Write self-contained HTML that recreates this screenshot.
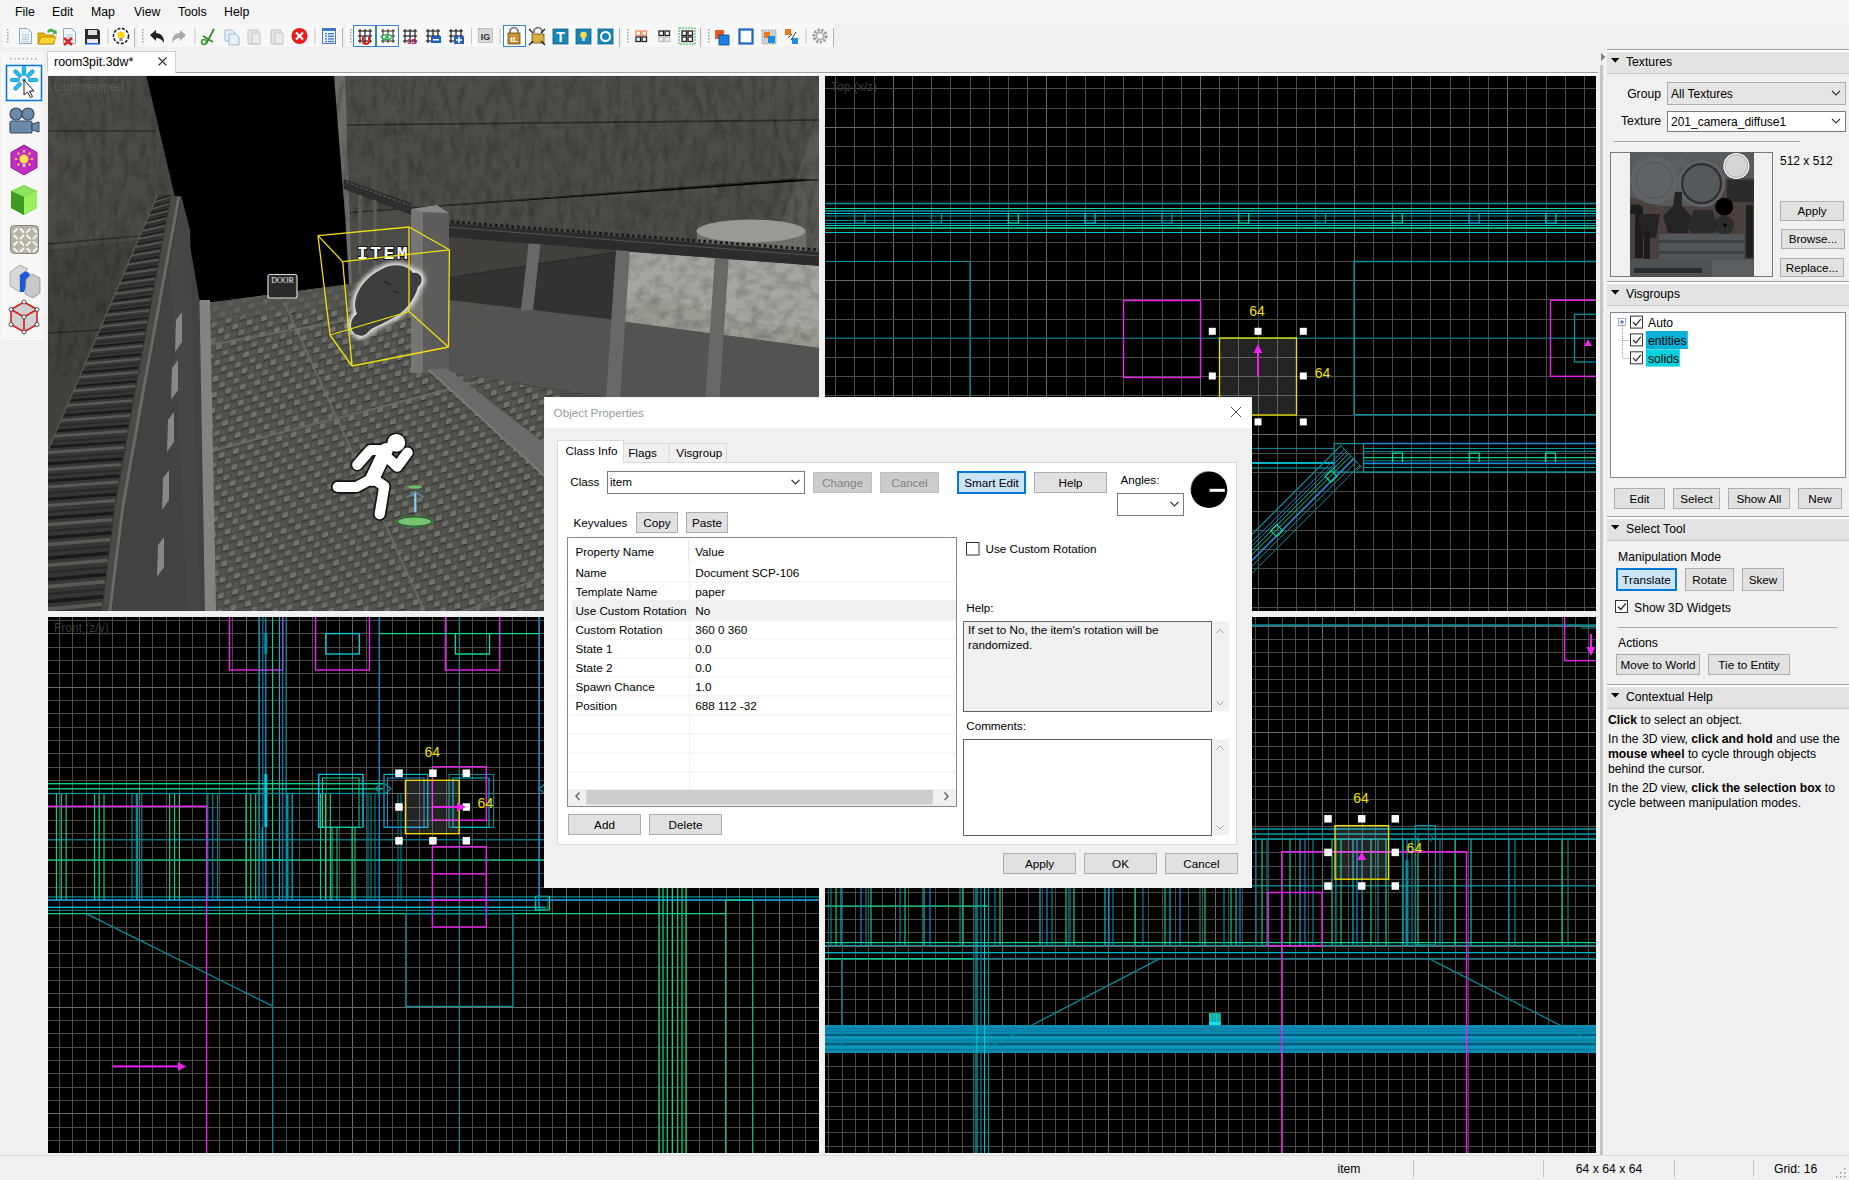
<!DOCTYPE html>
<html><head><meta charset="utf-8"><title>editor</title>
<style>
html,body{margin:0;padding:0;width:1849px;height:1180px;overflow:hidden;background:#f0f0f0}
body{position:relative;font-family:"Liberation Sans", sans-serif}
svg text{font-family:"Liberation Sans", sans-serif}
</style></head><body>
<svg width="1849" height="1180" viewBox="0 0 1849 1180" style="position:absolute;left:0;top:0">
<rect width="1849" height="1180" fill="#f0f0f0"/>
<rect x="0" y="0" width="1849" height="24" fill="#f4f4f4" stroke="none" stroke-width="1" />
<text x="15" y="16" font-size="12.3" fill="#000" text-anchor="start" font-weight="normal" >File</text>
<text x="52" y="16" font-size="12.3" fill="#000" text-anchor="start" font-weight="normal" >Edit</text>
<text x="91" y="16" font-size="12.3" fill="#000" text-anchor="start" font-weight="normal" >Map</text>
<text x="134" y="16" font-size="12.3" fill="#000" text-anchor="start" font-weight="normal" >View</text>
<text x="178" y="16" font-size="12.3" fill="#000" text-anchor="start" font-weight="normal" >Tools</text>
<text x="224" y="16" font-size="12.3" fill="#000" text-anchor="start" font-weight="normal" >Help</text>
<rect x="2" y="24" width="133" height="23" fill="#f7f7f7" stroke="none" stroke-width="1" rx="2"/>
<rect x="7" y="29" width="1.5" height="1.5" fill="#a0a0a0" stroke="none" stroke-width="1" />
<rect x="7" y="32" width="1.5" height="1.5" fill="#a0a0a0" stroke="none" stroke-width="1" />
<rect x="7" y="35" width="1.5" height="1.5" fill="#a0a0a0" stroke="none" stroke-width="1" />
<rect x="7" y="38" width="1.5" height="1.5" fill="#a0a0a0" stroke="none" stroke-width="1" />
<rect x="7" y="41" width="1.5" height="1.5" fill="#a0a0a0" stroke="none" stroke-width="1" />
<rect x="134" y="28" width="1" height="19" fill="#b4b4b4" stroke="none" stroke-width="1" />
<rect x="137" y="24" width="206" height="23" fill="#f7f7f7" stroke="none" stroke-width="1" rx="2"/>
<rect x="142" y="29" width="1.5" height="1.5" fill="#a0a0a0" stroke="none" stroke-width="1" />
<rect x="142" y="32" width="1.5" height="1.5" fill="#a0a0a0" stroke="none" stroke-width="1" />
<rect x="142" y="35" width="1.5" height="1.5" fill="#a0a0a0" stroke="none" stroke-width="1" />
<rect x="142" y="38" width="1.5" height="1.5" fill="#a0a0a0" stroke="none" stroke-width="1" />
<rect x="142" y="41" width="1.5" height="1.5" fill="#a0a0a0" stroke="none" stroke-width="1" />
<rect x="342" y="28" width="1" height="19" fill="#b4b4b4" stroke="none" stroke-width="1" />
<rect x="345" y="24" width="275" height="23" fill="#f7f7f7" stroke="none" stroke-width="1" rx="2"/>
<rect x="350" y="29" width="1.5" height="1.5" fill="#a0a0a0" stroke="none" stroke-width="1" />
<rect x="350" y="32" width="1.5" height="1.5" fill="#a0a0a0" stroke="none" stroke-width="1" />
<rect x="350" y="35" width="1.5" height="1.5" fill="#a0a0a0" stroke="none" stroke-width="1" />
<rect x="350" y="38" width="1.5" height="1.5" fill="#a0a0a0" stroke="none" stroke-width="1" />
<rect x="350" y="41" width="1.5" height="1.5" fill="#a0a0a0" stroke="none" stroke-width="1" />
<rect x="619" y="28" width="1" height="19" fill="#b4b4b4" stroke="none" stroke-width="1" />
<rect x="622" y="24" width="79" height="23" fill="#f7f7f7" stroke="none" stroke-width="1" rx="2"/>
<rect x="627" y="29" width="1.5" height="1.5" fill="#a0a0a0" stroke="none" stroke-width="1" />
<rect x="627" y="32" width="1.5" height="1.5" fill="#a0a0a0" stroke="none" stroke-width="1" />
<rect x="627" y="35" width="1.5" height="1.5" fill="#a0a0a0" stroke="none" stroke-width="1" />
<rect x="627" y="38" width="1.5" height="1.5" fill="#a0a0a0" stroke="none" stroke-width="1" />
<rect x="627" y="41" width="1.5" height="1.5" fill="#a0a0a0" stroke="none" stroke-width="1" />
<rect x="700" y="28" width="1" height="19" fill="#b4b4b4" stroke="none" stroke-width="1" />
<rect x="703" y="24" width="131" height="23" fill="#f7f7f7" stroke="none" stroke-width="1" rx="2"/>
<rect x="708" y="29" width="1.5" height="1.5" fill="#a0a0a0" stroke="none" stroke-width="1" />
<rect x="708" y="32" width="1.5" height="1.5" fill="#a0a0a0" stroke="none" stroke-width="1" />
<rect x="708" y="35" width="1.5" height="1.5" fill="#a0a0a0" stroke="none" stroke-width="1" />
<rect x="708" y="38" width="1.5" height="1.5" fill="#a0a0a0" stroke="none" stroke-width="1" />
<rect x="708" y="41" width="1.5" height="1.5" fill="#a0a0a0" stroke="none" stroke-width="1" />
<rect x="833" y="28" width="1" height="19" fill="#b4b4b4" stroke="none" stroke-width="1" />
<line x1="108" y1="28" x2="108" y2="44" stroke="#c8c8c8" stroke-width="1" />
<line x1="195" y1="28" x2="195" y2="44" stroke="#c8c8c8" stroke-width="1" />
<line x1="315" y1="28" x2="315" y2="44" stroke="#c8c8c8" stroke-width="1" />
<line x1="471.5" y1="28" x2="471.5" y2="44" stroke="#c8c8c8" stroke-width="1" />
<line x1="500" y1="28" x2="500" y2="44" stroke="#c8c8c8" stroke-width="1" />
<line x1="806" y1="28" x2="806" y2="44" stroke="#c8c8c8" stroke-width="1" />
<path d="M19.5,28.5 h8 l4,4 v11 h-12 z" fill="#eef6fb" stroke="#8aa7bb" stroke-width="1"/>
<line x1="22" y1="35.0" x2="29" y2="35.0" stroke="#9fb6c6" stroke-width="0.8" />
<line x1="22" y1="37.2" x2="29" y2="37.2" stroke="#9fb6c6" stroke-width="0.8" />
<line x1="22" y1="39.4" x2="29" y2="39.4" stroke="#9fb6c6" stroke-width="0.8" />
<line x1="22" y1="41.6" x2="29" y2="41.6" stroke="#9fb6c6" stroke-width="0.8" />
<path d="M38,33 h6 l2,2 h8 v9 h-16 z" fill="#e8b400" stroke="#b08400" stroke-width="0.8"/>
<path d="M38,44 l3,-7 h15 l-3,7 z" fill="#ffd633" stroke="#b08400" stroke-width="0.8"/>
<path d="M47,31 q4,-5 8,0 l1,-2 l1,5 l-5,0 l2,-1 q-3,-3 -6,0 z" fill="#3cb34a"/>
<path d="M63.5,28.5 h8 l4,4 v11 h-12 z" fill="#eef6fb" stroke="#8aa7bb" stroke-width="1"/>
<line x1="66" y1="35.0" x2="73" y2="35.0" stroke="#9fb6c6" stroke-width="0.8" />
<line x1="66" y1="37.2" x2="73" y2="37.2" stroke="#9fb6c6" stroke-width="0.8" />
<line x1="66" y1="39.4" x2="73" y2="39.4" stroke="#9fb6c6" stroke-width="0.8" />
<line x1="66" y1="41.6" x2="73" y2="41.6" stroke="#9fb6c6" stroke-width="0.8" />
<path d="M64,38 l8,7 M72,38 l-8,7" stroke="#e02020" stroke-width="2.4"/>
<path d="M85,29 h13 l2,2 v13 h-15 z" fill="#2b2b2b"/>
<rect x="88" y="30" width="9" height="5" fill="#ddd" stroke="none" stroke-width="1" />
<rect x="87" y="39" width="11" height="5" fill="#e8e8e8" stroke="none" stroke-width="1" />
<rect x="85" y="43" width="15" height="1.5" fill="#1a5fd0" stroke="none" stroke-width="1" />
<circle cx="121" cy="36" r="7.5" fill="#fff" stroke="#222" stroke-width="1.6" stroke-dasharray="3 1.5"/>
<circle cx="121" cy="35" r="3.5" fill="#ffd400"/>
<rect x="119.5" y="38" width="3" height="3" fill="#888" stroke="none" stroke-width="1" />
<path d="M150,35 l6,-5 v3 q8,0 8,10 q-3,-5 -8,-5 v3 z" fill="#222"/>
<path d="M186,35 l-6,-5 v3 q-8,0 -8,10 q3,-5 8,-5 v3 z" fill="#aaa"/>
<path d="M206,44 l8,-15 M203,36 l10,6" stroke="#3a8a2a" stroke-width="1.8"/>
<circle cx="204" cy="42" r="2.5" fill="none" stroke="#2fa02f" stroke-width="1.5"/>
<path d="M225,30 h7 l3,3 v8 h-10 z" fill="#e8f0f8" stroke="#a5b9cc"/><path d="M229,34 h7 l3,3 v8 h-10 z" fill="#e8f0f8" stroke="#a5b9cc"/>
<path d="M248,30 h10 v14 h-10 z" fill="#e4e4e4" stroke="#c4c4c4"/><path d="M252,33 h8 v11 h-8 z" fill="#ececec" stroke="#c4c4c4"/>
<path d="M271,30 h10 v14 h-10 z" fill="#e4e4e4" stroke="#c4c4c4"/><path d="M275,33 h8 v11 h-8 z" fill="#ececec" stroke="#c4c4c4"/>
<circle cx="299.5" cy="36" r="8" fill="#e81c1c"/><path d="M296,32.5 l7,7 M303,32.5 l-7,7" stroke="#fff" stroke-width="2.2"/>
<rect x="322.5" y="28.5" width="13" height="15" fill="#f4f8fc" stroke="#4a7ab8"/>
<rect x="322" y="28" width="14" height="3" fill="#3a78c8" stroke="none" stroke-width="1" />
<rect x="325" y="33.0" width="2" height="1.4" fill="#3a78c8" stroke="none" stroke-width="1" />
<rect x="328" y="33.0" width="6" height="1.4" fill="#3a78c8" stroke="none" stroke-width="1" />
<rect x="325" y="35.6" width="2" height="1.4" fill="#3a78c8" stroke="none" stroke-width="1" />
<rect x="328" y="35.6" width="6" height="1.4" fill="#3a78c8" stroke="none" stroke-width="1" />
<rect x="325" y="38.2" width="2" height="1.4" fill="#3a78c8" stroke="none" stroke-width="1" />
<rect x="328" y="38.2" width="6" height="1.4" fill="#3a78c8" stroke="none" stroke-width="1" />
<rect x="325" y="40.8" width="2" height="1.4" fill="#3a78c8" stroke="none" stroke-width="1" />
<rect x="328" y="40.8" width="6" height="1.4" fill="#3a78c8" stroke="none" stroke-width="1" />
<rect x="353.5" y="25.5" width="22" height="21" fill="#ffffff" stroke="#3383d8" stroke-width="1" />
<rect x="376.5" y="25.5" width="22" height="21" fill="#ffffff" stroke="#3383d8" stroke-width="1" />
<line x1="360" y1="29" x2="360" y2="43" stroke="#222" stroke-width="1.2" />
<line x1="358" y1="31" x2="372" y2="31" stroke="#222" stroke-width="1.2" />
<line x1="365" y1="29" x2="365" y2="43" stroke="#222" stroke-width="1.2" />
<line x1="358" y1="36" x2="372" y2="36" stroke="#222" stroke-width="1.2" />
<line x1="370" y1="29" x2="370" y2="43" stroke="#222" stroke-width="1.2" />
<line x1="358" y1="41" x2="372" y2="41" stroke="#222" stroke-width="1.2" />
<path d="M363,37 v4 q0,3 3,3 q3,0 3,-3 v-4" fill="none" stroke="#e02020" stroke-width="2"/>
<line x1="383" y1="29" x2="383" y2="43" stroke="#444" stroke-width="1.2" />
<line x1="381" y1="31" x2="395" y2="31" stroke="#444" stroke-width="1.2" />
<line x1="388" y1="29" x2="388" y2="43" stroke="#444" stroke-width="1.2" />
<line x1="381" y1="36" x2="395" y2="36" stroke="#444" stroke-width="1.2" />
<line x1="393" y1="29" x2="393" y2="43" stroke="#444" stroke-width="1.2" />
<line x1="381" y1="41" x2="395" y2="41" stroke="#444" stroke-width="1.2" />
<path d="M381,37 q6,-5 12,0 q-6,5 -12,0 z" fill="#fff" stroke="#2aa84a" stroke-width="1.3"/><circle cx="387" cy="37" r="1.8" fill="#2aa84a"/>
<line x1="405" y1="29" x2="405" y2="43" stroke="#222" stroke-width="1.2" />
<line x1="403" y1="31" x2="417" y2="31" stroke="#222" stroke-width="1.2" />
<line x1="410" y1="29" x2="410" y2="43" stroke="#222" stroke-width="1.2" />
<line x1="403" y1="36" x2="417" y2="36" stroke="#222" stroke-width="1.2" />
<line x1="415" y1="29" x2="415" y2="43" stroke="#222" stroke-width="1.2" />
<line x1="403" y1="41" x2="417" y2="41" stroke="#222" stroke-width="1.2" />
<text x="407" y="44" font-size="8" fill="#c0206a" text-anchor="start" font-weight="bold" >3D</text>
<line x1="428" y1="29" x2="428" y2="43" stroke="#222" stroke-width="1.2" />
<line x1="426" y1="31" x2="440" y2="31" stroke="#222" stroke-width="1.2" />
<line x1="433" y1="29" x2="433" y2="43" stroke="#222" stroke-width="1.2" />
<line x1="426" y1="36" x2="440" y2="36" stroke="#222" stroke-width="1.2" />
<line x1="438" y1="29" x2="438" y2="43" stroke="#222" stroke-width="1.2" />
<line x1="426" y1="41" x2="440" y2="41" stroke="#222" stroke-width="1.2" />
<rect x="431" y="36" width="10" height="7" fill="#2060c0" stroke="none" stroke-width="1" />
<rect x="433" y="39" width="6" height="1.5" fill="#fff" stroke="none" stroke-width="1" />
<line x1="451" y1="29" x2="451" y2="43" stroke="#222" stroke-width="1.2" />
<line x1="449" y1="31" x2="463" y2="31" stroke="#222" stroke-width="1.2" />
<line x1="456" y1="29" x2="456" y2="43" stroke="#222" stroke-width="1.2" />
<line x1="449" y1="36" x2="463" y2="36" stroke="#222" stroke-width="1.2" />
<line x1="461" y1="29" x2="461" y2="43" stroke="#222" stroke-width="1.2" />
<line x1="449" y1="41" x2="463" y2="41" stroke="#222" stroke-width="1.2" />
<rect x="454" y="36" width="10" height="8" fill="#2060c0" stroke="none" stroke-width="1" />
<path d="M459,37 v6 M456,40 h6" stroke="#fff" stroke-width="1.6"/>
<rect x="478.5" y="28.5" width="14" height="14" fill="#d8d8d8" stroke="#999" stroke-width="0.8" stroke-dasharray="2 1"/>
<text x="485.5" y="40" font-size="9" fill="#333" text-anchor="middle" font-weight="bold" >IG</text>
<rect x="503.5" y="25.5" width="22" height="21" fill="#ffffff" stroke="#3383d8" stroke-width="1" />
<path d="M510,33 v-3 q4,-5 8,0 v3" fill="none" stroke="#888" stroke-width="2"/>
<rect x="508" y="33" width="12" height="11" fill="#c89030" stroke="#6a4a10" stroke-width="0.8" />
<text x="514" y="42" font-size="8" fill="#fff" text-anchor="middle" font-weight="bold" >tL</text>
<path d="M534,33 v-3 q4,-5 8,0 v3" fill="none" stroke="#888" stroke-width="2"/>
<rect x="532" y="34" width="12" height="9" fill="#d8b040" stroke="#6a4a10" stroke-width="0.8" />
<path d="M529,29 l4,4 M545,29 l-4,4 M529,45 l4,-4 M545,45 l-4,-4" stroke="#222" stroke-width="1.3"/>
<rect x="553" y="29" width="15" height="15" fill="#1a86b8" stroke="#0d5f85" stroke-width="0.8" />
<rect x="576" y="29" width="15" height="15" fill="#1a86b8" stroke="#0d5f85" stroke-width="0.8" />
<rect x="598" y="29" width="15" height="15" fill="#1a86b8" stroke="#0d5f85" stroke-width="0.8" />
<text x="560.5" y="42" font-size="14" fill="#fff" text-anchor="middle" font-weight="bold" >T</text>
<circle cx="583.5" cy="35" r="3.2" fill="#ffd84a"/>
<rect x="582" y="38" width="3" height="3" fill="#ccc" stroke="none" stroke-width="1" />
<circle cx="605.5" cy="36.5" r="4.5" fill="none" stroke="#fff" stroke-width="2"/>
<rect x="636" y="31" width="4.5" height="4.5" fill="none" stroke="#f08a5a" stroke-width="1.3" />
<rect x="642" y="31" width="4.5" height="4.5" fill="none" stroke="#f08a5a" stroke-width="1.3" />
<rect x="636" y="37" width="4.5" height="4.5" fill="none" stroke="#222" stroke-width="1.3" />
<rect x="642" y="37" width="4.5" height="4.5" fill="none" stroke="#222" stroke-width="1.3" />
<rect x="659" y="31" width="4.5" height="4.5" fill="none" stroke="#222" stroke-width="1.3" />
<rect x="665" y="31" width="4.5" height="4.5" fill="none" stroke="#222" stroke-width="1.3" />
<rect x="659" y="37" width="4.5" height="4.5" fill="none" stroke="#bbb" stroke-width="1.3" />
<rect x="665" y="37" width="4.5" height="4.5" fill="none" stroke="#bbb" stroke-width="1.3" />
<rect x="679" y="28" width="16" height="16" fill="none" stroke="#30b040" stroke-width="1" stroke-dasharray="2 1"/>
<rect x="682" y="31" width="4.5" height="4.5" fill="none" stroke="#222" stroke-width="1.3" />
<rect x="688" y="31" width="4.5" height="4.5" fill="none" stroke="#222" stroke-width="1.3" />
<rect x="682" y="37" width="4.5" height="4.5" fill="none" stroke="#222" stroke-width="1.3" />
<rect x="688" y="37" width="4.5" height="4.5" fill="none" stroke="#222" stroke-width="1.3" />
<rect x="715" y="30" width="9" height="9" fill="#e85a20" stroke="none" stroke-width="1" />
<rect x="719" y="35" width="10" height="10" fill="#1a80e0" stroke="#0a4a90" stroke-width="0.8" />
<rect x="739.5" y="29.5" width="13" height="14" fill="#fff" stroke="#1a66c0" stroke-width="2.2" />
<rect x="762" y="30" width="14" height="14" fill="#d0d0d0" stroke="#999" stroke-width="0.8" stroke-dasharray="2 1"/>
<rect x="764" y="32" width="6" height="6" fill="#e87a20" stroke="none" stroke-width="1" />
<rect x="768" y="36" width="7" height="7" fill="#1a90e0" stroke="none" stroke-width="1" />
<rect x="785" y="29" width="6" height="6" fill="#e87a20" stroke="none" stroke-width="1" />
<rect x="792" y="38" width="6" height="6" fill="#1a90e0" stroke="none" stroke-width="1" />
<path d="M791,40 l5,-8 M788,38 l4,-4" stroke="#444" stroke-width="1"/>
<circle cx="820" cy="36" r="6" fill="none" stroke="#999" stroke-width="3" stroke-dasharray="2.2 1.4"/><circle cx="820" cy="36" r="3.6" fill="#f7f7f7" stroke="#aaa" stroke-width="1.5"/>
<rect x="1" y="52" width="43" height="288" fill="#f7f7f7" stroke="none" stroke-width="1" />
<rect x="10.0" y="58" width="1.5" height="1.5" fill="#a8a8a8" stroke="none" stroke-width="1" />
<rect x="14.2" y="58" width="1.5" height="1.5" fill="#a8a8a8" stroke="none" stroke-width="1" />
<rect x="18.4" y="58" width="1.5" height="1.5" fill="#a8a8a8" stroke="none" stroke-width="1" />
<rect x="22.6" y="58" width="1.5" height="1.5" fill="#a8a8a8" stroke="none" stroke-width="1" />
<rect x="26.8" y="58" width="1.5" height="1.5" fill="#a8a8a8" stroke="none" stroke-width="1" />
<rect x="31.0" y="58" width="1.5" height="1.5" fill="#a8a8a8" stroke="none" stroke-width="1" />
<rect x="35.2" y="58" width="1.5" height="1.5" fill="#a8a8a8" stroke="none" stroke-width="1" />
<rect x="6.5" y="65.5" width="35" height="35" fill="#fbfbfb" stroke="#0a78d8" stroke-width="1.6" />
<line x1="30.0" y1="80.0" x2="36.0" y2="80.0" stroke="#1a8ec8" stroke-width="4.2" stroke-linecap="round"/>
<line x1="30.0" y1="80.0" x2="36.0" y2="80.0" stroke="#22c4f0" stroke-width="2.6" stroke-linecap="round"/>
<line x1="19.757359312880716" y1="84.24264068711929" x2="15.51471862576143" y2="88.48528137423857" stroke="#1a8ec8" stroke-width="4.2" stroke-linecap="round"/>
<line x1="19.757359312880716" y1="84.24264068711929" x2="15.51471862576143" y2="88.48528137423857" stroke="#22c4f0" stroke-width="2.6" stroke-linecap="round"/>
<line x1="18.0" y1="80.0" x2="12.0" y2="80.0" stroke="#1a8ec8" stroke-width="4.2" stroke-linecap="round"/>
<line x1="18.0" y1="80.0" x2="12.0" y2="80.0" stroke="#22c4f0" stroke-width="2.6" stroke-linecap="round"/>
<line x1="19.757359312880716" y1="75.75735931288071" x2="15.514718625761429" y2="71.51471862576143" stroke="#1a8ec8" stroke-width="4.2" stroke-linecap="round"/>
<line x1="19.757359312880716" y1="75.75735931288071" x2="15.514718625761429" y2="71.51471862576143" stroke="#22c4f0" stroke-width="2.6" stroke-linecap="round"/>
<line x1="24.0" y1="74.0" x2="23.999999999999996" y2="68.0" stroke="#1a8ec8" stroke-width="4.2" stroke-linecap="round"/>
<line x1="24.0" y1="74.0" x2="23.999999999999996" y2="68.0" stroke="#22c4f0" stroke-width="2.6" stroke-linecap="round"/>
<line x1="28.242640687119284" y1="75.75735931288071" x2="32.48528137423857" y2="71.51471862576143" stroke="#1a8ec8" stroke-width="4.2" stroke-linecap="round"/>
<line x1="28.242640687119284" y1="75.75735931288071" x2="32.48528137423857" y2="71.51471862576143" stroke="#22c4f0" stroke-width="2.6" stroke-linecap="round"/>
<circle cx="24" cy="80" r="1.8" fill="#1a9ad8"/>
<path d="M24,80 l0,15 l3.5,-3 l3,5.5 l2,-1 l-3,-5.5 l4.5,0 z" fill="#fff" stroke="#222" stroke-width="1"/>
<circle cx="16" cy="114" r="6" fill="#6a8aa8" stroke="#3a4a60" stroke-width="1.2"/><circle cx="28" cy="114" r="6" fill="#6a8aa8" stroke="#3a4a60" stroke-width="1.2"/>
<rect x="10" y="121" width="22" height="12" fill="#6a8aa8" stroke="#3a4a60" stroke-width="1.2" rx="2"/>
<path d="M32,124 l7,-2 v10 l-7,-2 z" fill="#6a8aa8" stroke="#3a4a60"/>
<path d="M24,145 l13,7.5 v15 l-13,7.5 l-13,-7.5 v-15 z" fill="#c02cc0" stroke="#8a1a90"/>
<circle cx="24" cy="159" r="4.5" fill="#ffe24a"/>
<line x1="30.5" y1="159.0" x2="33.0" y2="159.0" stroke="#ffe24a" stroke-width="1.6" />
<line x1="28.59619407771256" y1="163.59619407771257" x2="30.36396103067893" y2="165.36396103067892" stroke="#ffe24a" stroke-width="1.6" />
<line x1="19.40380592228744" y1="163.59619407771257" x2="17.63603896932107" y2="165.36396103067892" stroke="#ffe24a" stroke-width="1.6" />
<line x1="17.5" y1="159.0" x2="15.0" y2="159.0" stroke="#ffe24a" stroke-width="1.6" />
<line x1="19.40380592228744" y1="154.40380592228743" x2="17.63603896932107" y2="152.63603896932108" stroke="#ffe24a" stroke-width="1.6" />
<line x1="24.0" y1="152.5" x2="24.0" y2="150.0" stroke="#ffe24a" stroke-width="1.6" />
<line x1="28.596194077712557" y1="154.40380592228743" x2="30.363961030678926" y2="152.63603896932108" stroke="#ffe24a" stroke-width="1.6" />
<rect x="22.5" y="164" width="3" height="3" fill="#ccc" stroke="none" stroke-width="1" />
<path d="M24,185 l13,6 v17 l-13,7 l-13,-7 v-17 z" fill="#5ab830"/>
<path d="M11,191 l13,6 l13,-6 l-13,-6 z" fill="#8ee060"/>
<path d="M24,197 v18 l13,-7 v-17 z" fill="#9af060"/>
<path d="M11,191 l13,6 v18 l-13,-7 z" fill="#3e9a22"/>
<rect x="10.5" y="225.5" width="28" height="28" fill="#b8b4a8" stroke="#8a867a" stroke-width="1" rx="4"/>
<line x1="14.0" y1="232.0" x2="17.0" y2="229.0" stroke="#f4f4f0" stroke-width="2" stroke-linecap="round"/>
<line x1="14.0" y1="235.5" x2="17.0" y2="238.5" stroke="#f4f4f0" stroke-width="2" stroke-linecap="round"/>
<line x1="14.0" y1="245.0" x2="17.0" y2="242.0" stroke="#f4f4f0" stroke-width="2" stroke-linecap="round"/>
<line x1="14.0" y1="248.5" x2="17.0" y2="251.5" stroke="#f4f4f0" stroke-width="2" stroke-linecap="round"/>
<line x1="20.5" y1="229.0" x2="23.5" y2="232.0" stroke="#f4f4f0" stroke-width="2" stroke-linecap="round"/>
<line x1="20.5" y1="238.5" x2="23.5" y2="235.5" stroke="#f4f4f0" stroke-width="2" stroke-linecap="round"/>
<line x1="20.5" y1="242.0" x2="23.5" y2="245.0" stroke="#f4f4f0" stroke-width="2" stroke-linecap="round"/>
<line x1="20.5" y1="251.5" x2="23.5" y2="248.5" stroke="#f4f4f0" stroke-width="2" stroke-linecap="round"/>
<line x1="27.0" y1="232.0" x2="30.0" y2="229.0" stroke="#f4f4f0" stroke-width="2" stroke-linecap="round"/>
<line x1="27.0" y1="235.5" x2="30.0" y2="238.5" stroke="#f4f4f0" stroke-width="2" stroke-linecap="round"/>
<line x1="27.0" y1="245.0" x2="30.0" y2="242.0" stroke="#f4f4f0" stroke-width="2" stroke-linecap="round"/>
<line x1="27.0" y1="248.5" x2="30.0" y2="251.5" stroke="#f4f4f0" stroke-width="2" stroke-linecap="round"/>
<line x1="33.5" y1="229.0" x2="36.5" y2="232.0" stroke="#f4f4f0" stroke-width="2" stroke-linecap="round"/>
<line x1="33.5" y1="238.5" x2="36.5" y2="235.5" stroke="#f4f4f0" stroke-width="2" stroke-linecap="round"/>
<line x1="33.5" y1="242.0" x2="36.5" y2="245.0" stroke="#f4f4f0" stroke-width="2" stroke-linecap="round"/>
<line x1="33.5" y1="251.5" x2="36.5" y2="248.5" stroke="#f4f4f0" stroke-width="2" stroke-linecap="round"/>
<path d="M10,272 l10,-7 l8,4 l-8,6 v17 l-10,-6 z" fill="#d8d8d8" stroke="#888" stroke-width="0.6"/>
<path d="M20,275 l6,-4 l4,3 l-6,18 l-4,0 z" fill="#1a5ad8"/>
<path d="M26,279 l6,-5 l8,4 v15 l-7,5 l-8,-4 z" fill="#c8c8c8" stroke="#777" stroke-width="0.6"/>
<path d="M24,302 l13,7.5 v15 l-13,7.5 l-13,-7.5 v-15 z" fill="#d0d0d0" stroke="#e01010" stroke-width="1.5"/>
<path d="M11,309.5 l13,7.5 l13,-7.5 M24,317 v15" fill="none" stroke="#e01010" stroke-width="1.5"/>
<circle cx="24" cy="302" r="2" fill="#fff" stroke="#222" stroke-width="0.8"/>
<circle cx="37" cy="309.5" r="2" fill="#fff" stroke="#222" stroke-width="0.8"/>
<circle cx="37" cy="324.5" r="2" fill="#fff" stroke="#222" stroke-width="0.8"/>
<circle cx="24" cy="332" r="2" fill="#fff" stroke="#222" stroke-width="0.8"/>
<circle cx="11" cy="324.5" r="2" fill="#fff" stroke="#222" stroke-width="0.8"/>
<circle cx="11" cy="309.5" r="2" fill="#fff" stroke="#222" stroke-width="0.8"/>
<circle cx="24" cy="317" r="2" fill="#fff" stroke="#222" stroke-width="0.8"/>
<rect x="47.5" y="51.5" width="128" height="21" fill="#ffffff" stroke="#d0d0d0" stroke-width="1" />
<rect x="48" y="71" width="127" height="2" fill="#ffffff" stroke="none" stroke-width="1" />
<text x="54" y="66" font-size="12.4" fill="#000" text-anchor="start" font-weight="normal" >room3pit.3dw*</text>
<path d="M158.5,57.5 l8,8 M166.5,57.5 l-8,8" stroke="#333" stroke-width="1.1"/>
<rect x="176" y="72" width="1422" height="1" fill="#a0a0a0" stroke="none" stroke-width="1" />
<rect x="47" y="73" width="1551" height="2" fill="#ffffff" stroke="none" stroke-width="1" />
<rect x="46" y="75" width="1552" height="1080" fill="#f0f0f0" stroke="none" stroke-width="1" />
<rect x="0" y="1155" width="1849" height="1" fill="#d9d9d9" stroke="none" stroke-width="1" />
<rect x="0" y="1156" width="1849" height="24" fill="#f0f0f0" stroke="none" stroke-width="1" />
<text x="1349" y="1173" font-size="12.2" fill="#000" text-anchor="middle" font-weight="normal" >item</text>
<text x="1609" y="1173" font-size="12.2" fill="#000" text-anchor="middle" font-weight="normal" >64 x 64 x 64</text>
<text x="1774" y="1173" font-size="12.2" fill="#000" text-anchor="start" font-weight="normal" >Grid: 16</text>
<rect x="1413" y="1160" width="1" height="17" fill="#c8c8c8" stroke="none" stroke-width="1" />
<rect x="1543" y="1160" width="1" height="17" fill="#c8c8c8" stroke="none" stroke-width="1" />
<rect x="1674" y="1160" width="1" height="17" fill="#c8c8c8" stroke="none" stroke-width="1" />
<rect x="1753" y="1160" width="1" height="17" fill="#c8c8c8" stroke="none" stroke-width="1" />
<rect x="1844" y="1176" width="1.5" height="1.5" fill="#9a9a9a" stroke="none" stroke-width="1" />
<rect x="1840" y="1176" width="1.5" height="1.5" fill="#9a9a9a" stroke="none" stroke-width="1" />
<rect x="1836" y="1176" width="1.5" height="1.5" fill="#9a9a9a" stroke="none" stroke-width="1" />
<rect x="1844" y="1172" width="1.5" height="1.5" fill="#9a9a9a" stroke="none" stroke-width="1" />
<rect x="1840" y="1172" width="1.5" height="1.5" fill="#9a9a9a" stroke="none" stroke-width="1" />
<rect x="1844" y="1168" width="1.5" height="1.5" fill="#9a9a9a" stroke="none" stroke-width="1" />
<svg x="825" y="76" width="771" height="535" viewBox="825 76 771 535" overflow="hidden">
<rect x="825" y="76" width="771" height="535" fill="#000" stroke="none" stroke-width="1" />
<rect x="835" y="76" width="1" height="535" fill="#4a4a4a"/>
<rect x="854" y="76" width="1" height="535" fill="#4a4a4a"/>
<rect x="874" y="76" width="1" height="535" fill="#4a4a4a"/>
<rect x="893" y="76" width="1" height="535" fill="#6a6a6a"/>
<rect x="912" y="76" width="1" height="535" fill="#4a4a4a"/>
<rect x="931" y="76" width="1" height="535" fill="#4a4a4a"/>
<rect x="950" y="76" width="1" height="535" fill="#4a4a4a"/>
<rect x="970" y="76" width="1" height="535" fill="#4a4a4a"/>
<rect x="989" y="76" width="1" height="535" fill="#4a4a4a"/>
<rect x="1008" y="76" width="1" height="535" fill="#4a4a4a"/>
<rect x="1027" y="76" width="1" height="535" fill="#4a4a4a"/>
<rect x="1046" y="76" width="1" height="535" fill="#6a6a6a"/>
<rect x="1066" y="76" width="1" height="535" fill="#4a4a4a"/>
<rect x="1085" y="76" width="1" height="535" fill="#4a4a4a"/>
<rect x="1104" y="76" width="1" height="535" fill="#4a4a4a"/>
<rect x="1123" y="76" width="1" height="535" fill="#4a4a4a"/>
<rect x="1142" y="76" width="1" height="535" fill="#4a4a4a"/>
<rect x="1162" y="76" width="1" height="535" fill="#4a4a4a"/>
<rect x="1181" y="76" width="1" height="535" fill="#4a4a4a"/>
<rect x="1200" y="76" width="1" height="535" fill="#6a6a6a"/>
<rect x="1219" y="76" width="1" height="535" fill="#4a4a4a"/>
<rect x="1238" y="76" width="1" height="535" fill="#4a4a4a"/>
<rect x="1258" y="76" width="1" height="535" fill="#4a4a4a"/>
<rect x="1277" y="76" width="1" height="535" fill="#4a4a4a"/>
<rect x="1296" y="76" width="1" height="535" fill="#4a4a4a"/>
<rect x="1315" y="76" width="1" height="535" fill="#4a4a4a"/>
<rect x="1334" y="76" width="1" height="535" fill="#4a4a4a"/>
<rect x="1354" y="76" width="1" height="535" fill="#6a6a6a"/>
<rect x="1373" y="76" width="1" height="535" fill="#4a4a4a"/>
<rect x="1392" y="76" width="1" height="535" fill="#4a4a4a"/>
<rect x="1411" y="76" width="1" height="535" fill="#4a4a4a"/>
<rect x="1430" y="76" width="1" height="535" fill="#4a4a4a"/>
<rect x="1450" y="76" width="1" height="535" fill="#4a4a4a"/>
<rect x="1469" y="76" width="1" height="535" fill="#4a4a4a"/>
<rect x="1488" y="76" width="1" height="535" fill="#4a4a4a"/>
<rect x="1507" y="76" width="1" height="535" fill="#6a6a6a"/>
<rect x="1526" y="76" width="1" height="535" fill="#4a4a4a"/>
<rect x="1546" y="76" width="1" height="535" fill="#4a4a4a"/>
<rect x="1565" y="76" width="1" height="535" fill="#4a4a4a"/>
<rect x="1584" y="76" width="1" height="535" fill="#4a4a4a"/>
<rect x="825" y="88" width="771" height="1" fill="#4a4a4a"/>
<rect x="825" y="108" width="771" height="1" fill="#4a4a4a"/>
<rect x="825" y="127" width="771" height="1" fill="#6a6a6a"/>
<rect x="825" y="146" width="771" height="1" fill="#4a4a4a"/>
<rect x="825" y="165" width="771" height="1" fill="#4a4a4a"/>
<rect x="825" y="184" width="771" height="1" fill="#4a4a4a"/>
<rect x="825" y="203" width="771" height="1" fill="#4a4a4a"/>
<rect x="825" y="223" width="771" height="1" fill="#4a4a4a"/>
<rect x="825" y="242" width="771" height="1" fill="#4a4a4a"/>
<rect x="825" y="261" width="771" height="1" fill="#4a4a4a"/>
<rect x="825" y="280" width="771" height="1" fill="#6a6a6a"/>
<rect x="825" y="299" width="771" height="1" fill="#4a4a4a"/>
<rect x="825" y="319" width="771" height="1" fill="#4a4a4a"/>
<rect x="825" y="338" width="771" height="1" fill="#4a4a4a"/>
<rect x="825" y="357" width="771" height="1" fill="#4a4a4a"/>
<rect x="825" y="376" width="771" height="1" fill="#4a4a4a"/>
<rect x="825" y="395" width="771" height="1" fill="#4a4a4a"/>
<rect x="825" y="415" width="771" height="1" fill="#4a4a4a"/>
<rect x="825" y="434" width="771" height="1" fill="#6a6a6a"/>
<rect x="825" y="453" width="771" height="1" fill="#4a4a4a"/>
<rect x="825" y="472" width="771" height="1" fill="#4a4a4a"/>
<rect x="825" y="491" width="771" height="1" fill="#4a4a4a"/>
<rect x="825" y="511" width="771" height="1" fill="#4a4a4a"/>
<rect x="825" y="530" width="771" height="1" fill="#4a4a4a"/>
<rect x="825" y="549" width="771" height="1" fill="#4a4a4a"/>
<rect x="825" y="568" width="771" height="1" fill="#4a4a4a"/>
<rect x="825" y="588" width="771" height="1" fill="#6a6a6a"/>
<rect x="825" y="607" width="771" height="1" fill="#4a4a4a"/>
<text x="831" y="91" font-size="12" fill="#3a3a3a" text-anchor="start" font-weight="normal" >Top (x/z)</text>
<rect x="825" y="202.7" width="771" height="1.6" fill="#00929c"/>
<rect x="825" y="208.0" width="771" height="1" fill="#10d890"/>
<rect x="825" y="210.2" width="771" height="1.6" fill="#00929c"/>
<rect x="825" y="213.0" width="771" height="1" fill="#00c8d8"/>
<rect x="825" y="215.5" width="771" height="1" fill="#00929c"/>
<rect x="825" y="220.0" width="771" height="1" fill="#00929c"/>
<rect x="825" y="223.0" width="771" height="1" fill="#00929c"/>
<rect x="825" y="225.0" width="771" height="1" fill="#00c8d8"/>
<rect x="825" y="227.2" width="771" height="1.6" fill="#10d890"/>
<rect x="825" y="232.0" width="771" height="1" fill="#00c8d8"/>
<path d="M854.7,213.5 V223 H864.7 V213.5" fill="none" stroke="#00929c" stroke-width="1.2"/>
<path d="M931.5,213.5 V223 H941.5 V213.5" fill="none" stroke="#00929c" stroke-width="1.2"/>
<path d="M1008.3,213.5 V223 H1018.3 V213.5" fill="none" stroke="#10d890" stroke-width="1.2"/>
<path d="M1085.1,213.5 V223 H1095.1 V213.5" fill="none" stroke="#00c8d8" stroke-width="1.2"/>
<path d="M1161.9,213.5 V223 H1171.9 V213.5" fill="none" stroke="#00929c" stroke-width="1.2"/>
<path d="M1238.7,213.5 V223 H1248.7 V213.5" fill="none" stroke="#10d890" stroke-width="1.2"/>
<path d="M1315.5,213.5 V223 H1325.5 V213.5" fill="none" stroke="#00929c" stroke-width="1.2"/>
<path d="M1392.3,213.5 V223 H1402.3 V213.5" fill="none" stroke="#10d890" stroke-width="1.2"/>
<path d="M1469.1,213.5 V223 H1479.1 V213.5" fill="none" stroke="#1890e0" stroke-width="1.2"/>
<path d="M1545.9,213.5 V223 H1555.9 V213.5" fill="none" stroke="#00c8d8" stroke-width="1.2"/>
<path d="M825,261.5 H970 V611" fill="none" stroke="#00929c" stroke-width="1.2"/>
<rect x="825" y="337.5" width="771" height="1.4" fill="#006a72"/>
<rect x="1123.5" y="300.5" width="77.0" height="77.0" fill="none" stroke="#ee22ee" stroke-width="1.4"/>
<path d="M1600,261.5 H1354 V414.6 H1600" fill="none" stroke="#00929c" stroke-width="1.3"/>
<rect x="1550.5" y="300.3" width="59.5" height="76.0" fill="none" stroke="#ee22ee" stroke-width="1.4"/>
<rect x="1574.5" y="314.3" width="35.5" height="47.69999999999999" fill="none" stroke="#00929c" stroke-width="1.3"/>
<path d="M1588,339 l4,7 h-8 z" fill="#ee22ee"/>
<rect x="1363.4" y="442.8" width="232.5999999999999" height="1.4" fill="#1890e0"/>
<rect x="1363.4" y="448.0" width="232.5999999999999" height="1" fill="#00929c"/>
<rect x="1363.4" y="451.1" width="232.5999999999999" height="1" fill="#00929c"/>
<rect x="1363.4" y="457.09999999999997" width="232.5999999999999" height="1.2" fill="#10d890"/>
<rect x="1363.4" y="460.3" width="232.5999999999999" height="1" fill="#00929c"/>
<rect x="1363.4" y="462.59999999999997" width="232.5999999999999" height="1.6" fill="#1890e0"/>
<rect x="1363.4" y="467.0" width="232.5999999999999" height="1" fill="#00929c"/>
<rect x="1363.4" y="471.5" width="232.5999999999999" height="1" fill="#00c8d8"/>
<rect x="1362.9" y="443.5" width="1" height="28.5" fill="#00c8d8"/>
<path d="M1392.5,462 V453.2 H1402.5 V462" fill="none" stroke="#10d890" stroke-width="1.2"/>
<path d="M1469.2,462 V453.2 H1479.2 V462" fill="none" stroke="#10d890" stroke-width="1.2"/>
<path d="M1545.5,462 V453.2 H1555.5 V462" fill="none" stroke="#10d890" stroke-width="1.2"/>
<rect x="1251" y="447.9" width="83" height="1" fill="#00929c"/>
<rect x="1251" y="462.1" width="83" height="1.8" fill="#00c8d8"/>
<rect x="1251" y="467.4" width="83" height="1.2" fill="#00929c"/>
<rect x="1334.2" y="443.6" width="29.399999999999864" height="28.399999999999977" fill="none" stroke="#00929c" stroke-width="1.2"/>
<line x1="1340.8" y1="445.6" x2="1040.8" y2="745.6" stroke="#00929c" stroke-width="1.3"/>
<line x1="1344.3999999999999" y1="449.20000000000005" x2="1044.3999999999999" y2="749.2" stroke="#1890e0" stroke-width="1"/>
<line x1="1346.56" y1="451.36" x2="1046.56" y2="751.36" stroke="#00929c" stroke-width="1"/>
<line x1="1348.72" y1="453.52000000000004" x2="1048.72" y2="753.52" stroke="#00c8d8" stroke-width="1"/>
<line x1="1350.8799999999999" y1="455.68" x2="1050.8799999999999" y2="755.6800000000001" stroke="#10d890" stroke-width="1"/>
<line x1="1353.76" y1="458.56" x2="1053.76" y2="758.56" stroke="#1890e0" stroke-width="1.6"/>
<line x1="1356.6399999999999" y1="461.44" x2="1056.6399999999999" y2="761.44" stroke="#00929c" stroke-width="1"/>
<line x1="1360.24" y1="465.04" x2="1060.24" y2="765.04" stroke="#00929c" stroke-width="1"/>
<path d="M1340.8,445.6 l20,20.7 l-4,4" fill="none" stroke="#00929c" stroke-width="1"/>
<path d="M1331,470.2 l6,6 l-6,6 l-6,-6 z" fill="none" stroke="#10d890" stroke-width="1.2"/>
<path d="M1276.7,524.7 l6,6 l-6,6 l-6,-6 z" fill="none" stroke="#10d890" stroke-width="1.2"/>
<rect x="1219.5" y="338" width="77" height="77" fill="#ffffff" fill-opacity="0.14" stroke="#f0e000" stroke-width="1.3"/>
<rect x="1208.8" y="327.8" width="7" height="7" fill="#fff"/>
<rect x="1208.8" y="372.5" width="7" height="7" fill="#fff"/>
<rect x="1208.8" y="418.4" width="7" height="7" fill="#fff"/>
<rect x="1254.5" y="327.8" width="7" height="7" fill="#fff"/>
<rect x="1254.5" y="418.4" width="7" height="7" fill="#fff"/>
<rect x="1299.8" y="327.8" width="7" height="7" fill="#fff"/>
<rect x="1299.8" y="372.5" width="7" height="7" fill="#fff"/>
<rect x="1299.8" y="418.4" width="7" height="7" fill="#fff"/>
<rect x="1257.0" y="352" width="2" height="24" fill="#ee22ee"/>
<path d="M1258,344 l4.4,9 h-8.8 z" fill="#ee22ee"/>
<text x="1257" y="315.5" font-size="14" fill="#f0e000" text-anchor="middle" font-weight="normal" >64</text>
<text x="1314.8" y="378" font-size="14" fill="#f0e000" text-anchor="start" font-weight="normal" >64</text>
</svg>
<svg x="48" y="617" width="771" height="536" viewBox="48 617 771 536" overflow="hidden">
<rect x="48" y="617" width="771" height="536" fill="#000" stroke="none" stroke-width="1" />
<rect x="59" y="617" width="1" height="536" fill="#4a4a4a"/>
<rect x="72" y="617" width="1" height="536" fill="#4a4a4a"/>
<rect x="86" y="617" width="1" height="536" fill="#4a4a4a"/>
<rect x="99" y="617" width="1" height="536" fill="#4a4a4a"/>
<rect x="112" y="617" width="1" height="536" fill="#4a4a4a"/>
<rect x="126" y="617" width="1" height="536" fill="#4a4a4a"/>
<rect x="139" y="617" width="1" height="536" fill="#6a6a6a"/>
<rect x="152" y="617" width="1" height="536" fill="#4a4a4a"/>
<rect x="166" y="617" width="1" height="536" fill="#4a4a4a"/>
<rect x="179" y="617" width="1" height="536" fill="#4a4a4a"/>
<rect x="192" y="617" width="1" height="536" fill="#4a4a4a"/>
<rect x="206" y="617" width="1" height="536" fill="#4a4a4a"/>
<rect x="219" y="617" width="1" height="536" fill="#4a4a4a"/>
<rect x="232" y="617" width="1" height="536" fill="#4a4a4a"/>
<rect x="246" y="617" width="1" height="536" fill="#6a6a6a"/>
<rect x="259" y="617" width="1" height="536" fill="#4a4a4a"/>
<rect x="272" y="617" width="1" height="536" fill="#4a4a4a"/>
<rect x="286" y="617" width="1" height="536" fill="#4a4a4a"/>
<rect x="299" y="617" width="1" height="536" fill="#4a4a4a"/>
<rect x="312" y="617" width="1" height="536" fill="#4a4a4a"/>
<rect x="326" y="617" width="1" height="536" fill="#4a4a4a"/>
<rect x="339" y="617" width="1" height="536" fill="#4a4a4a"/>
<rect x="352" y="617" width="1" height="536" fill="#6a6a6a"/>
<rect x="366" y="617" width="1" height="536" fill="#4a4a4a"/>
<rect x="379" y="617" width="1" height="536" fill="#4a4a4a"/>
<rect x="392" y="617" width="1" height="536" fill="#4a4a4a"/>
<rect x="406" y="617" width="1" height="536" fill="#4a4a4a"/>
<rect x="419" y="617" width="1" height="536" fill="#4a4a4a"/>
<rect x="432" y="617" width="1" height="536" fill="#4a4a4a"/>
<rect x="446" y="617" width="1" height="536" fill="#4a4a4a"/>
<rect x="459" y="617" width="1" height="536" fill="#6a6a6a"/>
<rect x="472" y="617" width="1" height="536" fill="#4a4a4a"/>
<rect x="486" y="617" width="1" height="536" fill="#4a4a4a"/>
<rect x="499" y="617" width="1" height="536" fill="#4a4a4a"/>
<rect x="512" y="617" width="1" height="536" fill="#4a4a4a"/>
<rect x="526" y="617" width="1" height="536" fill="#4a4a4a"/>
<rect x="539" y="617" width="1" height="536" fill="#4a4a4a"/>
<rect x="552" y="617" width="1" height="536" fill="#4a4a4a"/>
<rect x="566" y="617" width="1" height="536" fill="#6a6a6a"/>
<rect x="579" y="617" width="1" height="536" fill="#4a4a4a"/>
<rect x="592" y="617" width="1" height="536" fill="#4a4a4a"/>
<rect x="606" y="617" width="1" height="536" fill="#4a4a4a"/>
<rect x="619" y="617" width="1" height="536" fill="#4a4a4a"/>
<rect x="632" y="617" width="1" height="536" fill="#4a4a4a"/>
<rect x="646" y="617" width="1" height="536" fill="#4a4a4a"/>
<rect x="659" y="617" width="1" height="536" fill="#4a4a4a"/>
<rect x="672" y="617" width="1" height="536" fill="#6a6a6a"/>
<rect x="686" y="617" width="1" height="536" fill="#4a4a4a"/>
<rect x="699" y="617" width="1" height="536" fill="#4a4a4a"/>
<rect x="712" y="617" width="1" height="536" fill="#4a4a4a"/>
<rect x="726" y="617" width="1" height="536" fill="#4a4a4a"/>
<rect x="739" y="617" width="1" height="536" fill="#4a4a4a"/>
<rect x="752" y="617" width="1" height="536" fill="#4a4a4a"/>
<rect x="765" y="617" width="1" height="536" fill="#4a4a4a"/>
<rect x="779" y="617" width="1" height="536" fill="#6a6a6a"/>
<rect x="792" y="617" width="1" height="536" fill="#4a4a4a"/>
<rect x="805" y="617" width="1" height="536" fill="#4a4a4a"/>
<rect x="819" y="617" width="1" height="536" fill="#4a4a4a"/>
<rect x="48" y="620" width="771" height="1" fill="#4a4a4a"/>
<rect x="48" y="633" width="771" height="1" fill="#4a4a4a"/>
<rect x="48" y="647" width="771" height="1" fill="#4a4a4a"/>
<rect x="48" y="660" width="771" height="1" fill="#4a4a4a"/>
<rect x="48" y="673" width="771" height="1" fill="#4a4a4a"/>
<rect x="48" y="687" width="771" height="1" fill="#6a6a6a"/>
<rect x="48" y="700" width="771" height="1" fill="#4a4a4a"/>
<rect x="48" y="713" width="771" height="1" fill="#4a4a4a"/>
<rect x="48" y="727" width="771" height="1" fill="#4a4a4a"/>
<rect x="48" y="740" width="771" height="1" fill="#4a4a4a"/>
<rect x="48" y="753" width="771" height="1" fill="#4a4a4a"/>
<rect x="48" y="767" width="771" height="1" fill="#4a4a4a"/>
<rect x="48" y="780" width="771" height="1" fill="#4a4a4a"/>
<rect x="48" y="793" width="771" height="1" fill="#6a6a6a"/>
<rect x="48" y="807" width="771" height="1" fill="#4a4a4a"/>
<rect x="48" y="820" width="771" height="1" fill="#4a4a4a"/>
<rect x="48" y="833" width="771" height="1" fill="#4a4a4a"/>
<rect x="48" y="847" width="771" height="1" fill="#4a4a4a"/>
<rect x="48" y="860" width="771" height="1" fill="#4a4a4a"/>
<rect x="48" y="873" width="771" height="1" fill="#4a4a4a"/>
<rect x="48" y="887" width="771" height="1" fill="#4a4a4a"/>
<rect x="48" y="900" width="771" height="1" fill="#6a6a6a"/>
<rect x="48" y="913" width="771" height="1" fill="#4a4a4a"/>
<rect x="48" y="927" width="771" height="1" fill="#4a4a4a"/>
<rect x="48" y="940" width="771" height="1" fill="#4a4a4a"/>
<rect x="48" y="953" width="771" height="1" fill="#4a4a4a"/>
<rect x="48" y="967" width="771" height="1" fill="#4a4a4a"/>
<rect x="48" y="980" width="771" height="1" fill="#4a4a4a"/>
<rect x="48" y="993" width="771" height="1" fill="#4a4a4a"/>
<rect x="48" y="1007" width="771" height="1" fill="#6a6a6a"/>
<rect x="48" y="1020" width="771" height="1" fill="#4a4a4a"/>
<rect x="48" y="1033" width="771" height="1" fill="#4a4a4a"/>
<rect x="48" y="1047" width="771" height="1" fill="#4a4a4a"/>
<rect x="48" y="1060" width="771" height="1" fill="#4a4a4a"/>
<rect x="48" y="1073" width="771" height="1" fill="#4a4a4a"/>
<rect x="48" y="1087" width="771" height="1" fill="#4a4a4a"/>
<rect x="48" y="1100" width="771" height="1" fill="#4a4a4a"/>
<rect x="48" y="1113" width="771" height="1" fill="#6a6a6a"/>
<rect x="48" y="1127" width="771" height="1" fill="#4a4a4a"/>
<rect x="48" y="1140" width="771" height="1" fill="#4a4a4a"/>
<text x="54" y="632" font-size="12" fill="#3a3a3a" text-anchor="start" font-weight="normal" >Front (z/y)</text>
<rect x="229.5" y="610" width="53.19999999999999" height="60" fill="none" stroke="#ee22ee" stroke-width="1.4"/>
<rect x="315.6" y="610" width="53.89999999999998" height="60" fill="none" stroke="#ee22ee" stroke-width="1.4"/>
<rect x="325.8" y="633.6" width="33.5" height="20.399999999999977" fill="none" stroke="#00c8d8" stroke-width="1.4"/>
<rect x="445.4" y="610" width="54.30000000000001" height="60" fill="none" stroke="#ee22ee" stroke-width="1.4"/>
<path d="M455.4,633.6 V654 H489.5 V633.6" fill="none" stroke="#10d890" stroke-width="1.3"/>
<rect x="379.2" y="632.95" width="159.8" height="1.3" fill="#10d890"/>
<rect x="378.59999999999997" y="617" width="1.2" height="296" fill="#1890e0"/>
<rect x="458.8" y="617" width="1" height="536" fill="#00929c"/>
<rect x="538.35" y="617" width="1.3" height="290" fill="#1890e0"/>
<rect x="258.5" y="617" width="1" height="283" fill="#00c8d8"/>
<rect x="262.4" y="617" width="1" height="283" fill="#1890e0"/>
<rect x="265.3" y="617" width="1" height="283" fill="#00c8d8"/>
<rect x="272.1" y="617" width="1" height="283" fill="#10d890"/>
<rect x="278.9" y="617" width="1" height="283" fill="#00c8d8"/>
<rect x="282.2" y="617" width="1" height="283" fill="#1890e0"/>
<rect x="285.6" y="617" width="1" height="283" fill="#00929c"/>
<rect x="264.3" y="633" width="3" height="21" fill="#00929c"/>
<rect x="264.3" y="774" width="3" height="53" fill="#00c8d8"/>
<rect x="48" y="783.0500000000001" width="335" height="1.3" fill="#10d890"/>
<rect x="48" y="788.15" width="335" height="1.3" fill="#10d890"/>
<rect x="48" y="792.85" width="335" height="1.3" fill="#00929c"/>
<rect x="48" y="839.1999999999999" width="497" height="1.2" fill="#00929c"/>
<rect x="48" y="859.4" width="497" height="1.2" fill="#10d890"/>
<rect x="48" y="896.3" width="771" height="1.2" fill="#00929c"/>
<rect x="48" y="899.2" width="771" height="1.6" fill="#1890e0"/>
<rect x="48" y="906.65" width="497" height="1.3" fill="#00c8d8"/>
<rect x="48" y="909.8" width="497" height="1" fill="#00929c"/>
<rect x="48" y="913.1" width="677.6" height="1.2" fill="#10d890"/>
<rect x="55.85" y="794" width="1.1" height="106" fill="#10d890"/>
<rect x="60.75" y="794" width="1.1" height="106" fill="#10d890"/>
<rect x="65.65" y="794" width="1.1" height="106" fill="#10d890"/>
<rect x="94.05" y="794" width="1.1" height="106" fill="#10d890"/>
<rect x="98.55" y="794" width="1.1" height="106" fill="#10d890"/>
<rect x="103.45" y="794" width="1.1" height="106" fill="#10d890"/>
<rect x="131.45" y="794" width="1.1" height="106" fill="#00929c"/>
<rect x="136.35" y="794" width="1.1" height="106" fill="#00929c"/>
<rect x="141.25" y="794" width="1.1" height="106" fill="#00929c"/>
<rect x="169.14999999999998" y="794" width="1.1" height="106" fill="#10d890"/>
<rect x="174.04999999999998" y="794" width="1.1" height="106" fill="#10d890"/>
<rect x="178.85" y="794" width="1.1" height="106" fill="#10d890"/>
<rect x="207.25" y="794" width="1.1" height="106" fill="#00929c"/>
<rect x="212.14999999999998" y="794" width="1.1" height="106" fill="#00929c"/>
<rect x="217.04999999999998" y="794" width="1.1" height="106" fill="#00929c"/>
<rect x="245.45" y="794" width="1.1" height="106" fill="#10d890"/>
<rect x="250.25" y="794" width="1.1" height="106" fill="#10d890"/>
<rect x="255.14999999999998" y="794" width="1.1" height="106" fill="#10d890"/>
<rect x="291.65" y="794" width="1.1" height="106" fill="#00c8d8"/>
<rect x="320.05" y="794" width="1.1" height="106" fill="#10d890"/>
<rect x="324.95" y="794" width="1.1" height="106" fill="#10d890"/>
<rect x="329.75" y="794" width="1.1" height="106" fill="#10d890"/>
<rect x="135.65" y="794" width="2.5" height="106" fill="#00929c"/>
<rect x="286.05" y="794" width="2.5" height="106" fill="#00929c"/>
<path d="M48,806.3 H206.6 V1153" fill="none" stroke="#ee22ee" stroke-width="1.4"/>
<path d="M262.2,827 V860 H283.3" fill="none" stroke="#00c8d8" stroke-width="1.1"/>
<rect x="272.15" y="860" width="1.1" height="293" fill="#00929c"/>
<path d="M319,827 V774.4 H363 V827" fill="none" stroke="#1890e0" stroke-width="1.1"/>
<rect x="318.5" y="774.4" width="44.5" height="52.89999999999998" fill="none" stroke="#00c8d8" stroke-width="1.1"/>
<rect x="322.5" y="778" width="36.5" height="49.299999999999955" fill="none" stroke="#10d890" stroke-width="1"/>
<rect x="384" y="774.4" width="43.80000000000001" height="52.89999999999998" fill="none" stroke="#00c8d8" stroke-width="1.1"/>
<rect x="387.5" y="778" width="36.5" height="49.299999999999955" fill="none" stroke="#1890e0" stroke-width="1"/>
<rect x="449" y="774.4" width="44.60000000000002" height="52.89999999999998" fill="none" stroke="#00929c" stroke-width="1.1"/>
<rect x="453" y="778" width="36" height="49.299999999999955" fill="none" stroke="#00c8d8" stroke-width="1"/>
<rect x="331.5" y="827" width="1" height="73" fill="#10d890"/>
<rect x="336.5" y="827" width="1" height="73" fill="#10d890"/>
<rect x="351.5" y="827" width="1" height="73" fill="#10d890"/>
<rect x="354.5" y="827" width="1" height="73" fill="#10d890"/>
<rect x="367.5" y="793" width="1" height="107" fill="#00929c"/>
<rect x="370.5" y="793" width="1" height="107" fill="#00929c"/>
<rect x="374.5" y="793" width="1" height="107" fill="#00929c"/>
<rect x="397.5" y="793" width="1" height="107" fill="#00929c"/>
<rect x="400.5" y="793" width="1" height="107" fill="#00929c"/>
<path d="M381,783.7 l-6,5 l6,5 M385,783.7 l6,5 l-6,5" fill="none" stroke="#00929c" stroke-width="1.2"/>
<path d="M545,783.7 l-6,5 l6,5" fill="none" stroke="#00929c" stroke-width="1.2"/>
<rect x="432.4" y="766.8" width="53.900000000000034" height="53.40000000000009" fill="none" stroke="#ee22ee" stroke-width="1.4"/>
<rect x="432.4" y="846.8" width="53.900000000000034" height="80.20000000000005" fill="none" stroke="#ee22ee" stroke-width="1.4"/>
<rect x="432.4" y="873.1999999999999" width="53.900000000000034" height="1.4" fill="#ee22ee"/>
<rect x="432.4" y="899.5999999999999" width="53.900000000000034" height="1.4" fill="#ee22ee"/>
<path d="M85.5,913.4 L273.2,1006.4" fill="none" stroke="#00929c" stroke-width="1.2"/>
<rect x="405.8" y="913.6" width="107.19999999999999" height="92.79999999999995" fill="none" stroke="#00929c" stroke-width="1.2"/>
<rect x="535.4" y="896.4" width="14.100000000000023" height="13.600000000000023" fill="none" stroke="#10d890" stroke-width="1.2"/>
<rect x="535.9" y="896.4" width="12.100000000000023" height="11.600000000000023" fill="none" stroke="#00929c" stroke-width="1"/>
<rect x="112.6" y="1065.4" width="67.4" height="2" fill="#ee22ee"/>
<path d="M186,1066.4 l-8,-4.5 v9 z" fill="#ee22ee"/>
<rect x="658.4" y="887" width="1.2" height="266" fill="#10d890"/>
<rect x="662.4" y="887" width="1.2" height="266" fill="#10d890"/>
<rect x="666.6999999999999" y="887" width="1.2" height="266" fill="#10d890"/>
<rect x="671.6999999999999" y="887" width="1.2" height="266" fill="#10d890"/>
<rect x="677.1" y="887" width="1.2" height="266" fill="#10d890"/>
<rect x="681.4" y="887" width="1.2" height="266" fill="#10d890"/>
<rect x="685.4" y="887" width="1.2" height="266" fill="#10d890"/>
<rect x="725.0" y="900" width="1.2" height="253" fill="#10b898"/>
<rect x="752.1" y="900" width="1.2" height="253" fill="#10b898"/>
<rect x="725.6" y="899.4" width="27.100000000000023" height="1.2" fill="#10d890"/>
<rect x="405.4" y="780.3" width="53.8" height="53.4" fill="#ffffff" fill-opacity="0.14" stroke="#f0e000" stroke-width="1.3"/>
<rect x="395.25" y="769.45" width="7.5" height="7.5" fill="#fff"/>
<rect x="395.25" y="803.25" width="7.5" height="7.5" fill="#fff"/>
<rect x="395.25" y="837.05" width="7.5" height="7.5" fill="#fff"/>
<rect x="429.15" y="769.45" width="7.5" height="7.5" fill="#fff"/>
<rect x="429.15" y="837.05" width="7.5" height="7.5" fill="#fff"/>
<rect x="462.55" y="769.45" width="7.5" height="7.5" fill="#fff"/>
<rect x="462.55" y="803.25" width="7.5" height="7.5" fill="#fff"/>
<rect x="462.55" y="837.05" width="7.5" height="7.5" fill="#fff"/>
<rect x="433" y="806.0" width="25" height="2" fill="#ee22ee"/>
<path d="M466,807 l-9,-4.5 v9 z" fill="#ee22ee"/>
<text x="432.2" y="757.4" font-size="14" fill="#f0e000" text-anchor="middle" font-weight="normal" >64</text>
<text x="477.6" y="807.5" font-size="14" fill="#f0e000" text-anchor="start" font-weight="normal" >64</text>
</svg>
<svg x="825" y="617" width="771" height="536" viewBox="825 617 771 536" overflow="hidden">
<rect x="825" y="617" width="771" height="536" fill="#000" stroke="none" stroke-width="1" />
<rect x="828" y="617" width="1" height="536" fill="#4a4a4a"/>
<rect x="842" y="617" width="1" height="536" fill="#4a4a4a"/>
<rect x="855" y="617" width="1" height="536" fill="#4a4a4a"/>
<rect x="868" y="617" width="1" height="536" fill="#4a4a4a"/>
<rect x="882" y="617" width="1" height="536" fill="#4a4a4a"/>
<rect x="895" y="617" width="1" height="536" fill="#6a6a6a"/>
<rect x="908" y="617" width="1" height="536" fill="#4a4a4a"/>
<rect x="922" y="617" width="1" height="536" fill="#4a4a4a"/>
<rect x="935" y="617" width="1" height="536" fill="#4a4a4a"/>
<rect x="948" y="617" width="1" height="536" fill="#4a4a4a"/>
<rect x="962" y="617" width="1" height="536" fill="#4a4a4a"/>
<rect x="975" y="617" width="1" height="536" fill="#4a4a4a"/>
<rect x="988" y="617" width="1" height="536" fill="#4a4a4a"/>
<rect x="1002" y="617" width="1" height="536" fill="#6a6a6a"/>
<rect x="1015" y="617" width="1" height="536" fill="#4a4a4a"/>
<rect x="1028" y="617" width="1" height="536" fill="#4a4a4a"/>
<rect x="1042" y="617" width="1" height="536" fill="#4a4a4a"/>
<rect x="1055" y="617" width="1" height="536" fill="#4a4a4a"/>
<rect x="1068" y="617" width="1" height="536" fill="#4a4a4a"/>
<rect x="1082" y="617" width="1" height="536" fill="#4a4a4a"/>
<rect x="1095" y="617" width="1" height="536" fill="#4a4a4a"/>
<rect x="1108" y="617" width="1" height="536" fill="#6a6a6a"/>
<rect x="1122" y="617" width="1" height="536" fill="#4a4a4a"/>
<rect x="1135" y="617" width="1" height="536" fill="#4a4a4a"/>
<rect x="1148" y="617" width="1" height="536" fill="#4a4a4a"/>
<rect x="1162" y="617" width="1" height="536" fill="#4a4a4a"/>
<rect x="1175" y="617" width="1" height="536" fill="#4a4a4a"/>
<rect x="1188" y="617" width="1" height="536" fill="#4a4a4a"/>
<rect x="1202" y="617" width="1" height="536" fill="#4a4a4a"/>
<rect x="1215" y="617" width="1" height="536" fill="#6a6a6a"/>
<rect x="1228" y="617" width="1" height="536" fill="#4a4a4a"/>
<rect x="1242" y="617" width="1" height="536" fill="#4a4a4a"/>
<rect x="1255" y="617" width="1" height="536" fill="#4a4a4a"/>
<rect x="1268" y="617" width="1" height="536" fill="#4a4a4a"/>
<rect x="1282" y="617" width="1" height="536" fill="#4a4a4a"/>
<rect x="1295" y="617" width="1" height="536" fill="#4a4a4a"/>
<rect x="1308" y="617" width="1" height="536" fill="#4a4a4a"/>
<rect x="1322" y="617" width="1" height="536" fill="#6a6a6a"/>
<rect x="1335" y="617" width="1" height="536" fill="#4a4a4a"/>
<rect x="1348" y="617" width="1" height="536" fill="#4a4a4a"/>
<rect x="1362" y="617" width="1" height="536" fill="#4a4a4a"/>
<rect x="1375" y="617" width="1" height="536" fill="#4a4a4a"/>
<rect x="1388" y="617" width="1" height="536" fill="#4a4a4a"/>
<rect x="1402" y="617" width="1" height="536" fill="#4a4a4a"/>
<rect x="1415" y="617" width="1" height="536" fill="#4a4a4a"/>
<rect x="1428" y="617" width="1" height="536" fill="#6a6a6a"/>
<rect x="1442" y="617" width="1" height="536" fill="#4a4a4a"/>
<rect x="1455" y="617" width="1" height="536" fill="#4a4a4a"/>
<rect x="1468" y="617" width="1" height="536" fill="#4a4a4a"/>
<rect x="1482" y="617" width="1" height="536" fill="#4a4a4a"/>
<rect x="1495" y="617" width="1" height="536" fill="#4a4a4a"/>
<rect x="1508" y="617" width="1" height="536" fill="#4a4a4a"/>
<rect x="1522" y="617" width="1" height="536" fill="#4a4a4a"/>
<rect x="1535" y="617" width="1" height="536" fill="#6a6a6a"/>
<rect x="1548" y="617" width="1" height="536" fill="#4a4a4a"/>
<rect x="1562" y="617" width="1" height="536" fill="#4a4a4a"/>
<rect x="1575" y="617" width="1" height="536" fill="#4a4a4a"/>
<rect x="1588" y="617" width="1" height="536" fill="#4a4a4a"/>
<rect x="825" y="626" width="771" height="1" fill="#6a6a6a"/>
<rect x="825" y="639" width="771" height="1" fill="#4a4a4a"/>
<rect x="825" y="652" width="771" height="1" fill="#4a4a4a"/>
<rect x="825" y="666" width="771" height="1" fill="#4a4a4a"/>
<rect x="825" y="679" width="771" height="1" fill="#4a4a4a"/>
<rect x="825" y="692" width="771" height="1" fill="#4a4a4a"/>
<rect x="825" y="706" width="771" height="1" fill="#4a4a4a"/>
<rect x="825" y="719" width="771" height="1" fill="#4a4a4a"/>
<rect x="825" y="732" width="771" height="1" fill="#6a6a6a"/>
<rect x="825" y="746" width="771" height="1" fill="#4a4a4a"/>
<rect x="825" y="759" width="771" height="1" fill="#4a4a4a"/>
<rect x="825" y="772" width="771" height="1" fill="#4a4a4a"/>
<rect x="825" y="786" width="771" height="1" fill="#4a4a4a"/>
<rect x="825" y="799" width="771" height="1" fill="#4a4a4a"/>
<rect x="825" y="812" width="771" height="1" fill="#4a4a4a"/>
<rect x="825" y="826" width="771" height="1" fill="#4a4a4a"/>
<rect x="825" y="839" width="771" height="1" fill="#6a6a6a"/>
<rect x="825" y="852" width="771" height="1" fill="#4a4a4a"/>
<rect x="825" y="866" width="771" height="1" fill="#4a4a4a"/>
<rect x="825" y="879" width="771" height="1" fill="#4a4a4a"/>
<rect x="825" y="892" width="771" height="1" fill="#4a4a4a"/>
<rect x="825" y="906" width="771" height="1" fill="#4a4a4a"/>
<rect x="825" y="919" width="771" height="1" fill="#4a4a4a"/>
<rect x="825" y="932" width="771" height="1" fill="#4a4a4a"/>
<rect x="825" y="946" width="771" height="1" fill="#6a6a6a"/>
<rect x="825" y="959" width="771" height="1" fill="#4a4a4a"/>
<rect x="825" y="972" width="771" height="1" fill="#4a4a4a"/>
<rect x="825" y="986" width="771" height="1" fill="#4a4a4a"/>
<rect x="825" y="999" width="771" height="1" fill="#4a4a4a"/>
<rect x="825" y="1012" width="771" height="1" fill="#4a4a4a"/>
<rect x="825" y="1026" width="771" height="1" fill="#4a4a4a"/>
<rect x="825" y="1039" width="771" height="1" fill="#4a4a4a"/>
<rect x="825" y="1052" width="771" height="1" fill="#6a6a6a"/>
<rect x="825" y="1066" width="771" height="1" fill="#4a4a4a"/>
<rect x="825" y="1079" width="771" height="1" fill="#4a4a4a"/>
<rect x="825" y="1092" width="771" height="1" fill="#4a4a4a"/>
<rect x="825" y="1106" width="771" height="1" fill="#4a4a4a"/>
<rect x="825" y="1119" width="771" height="1" fill="#4a4a4a"/>
<rect x="825" y="1132" width="771" height="1" fill="#4a4a4a"/>
<rect x="825" y="1146" width="771" height="1" fill="#4a4a4a"/>
<rect x="825" y="624.3000000000001" width="771" height="1.6" fill="#00929c"/>
<rect x="1564.6" y="610" width="45.40000000000009" height="50.60000000000002" fill="none" stroke="#ee22ee" stroke-width="1.4"/>
<rect x="1581" y="627.5" width="15" height="1" fill="#00929c"/>
<rect x="1590.0" y="634" width="2" height="16" fill="#ee22ee"/>
<path d="M1591,656 l-4.5,-9 h9 z" fill="#ee22ee"/>
<rect x="825" y="828.2" width="771" height="1.6" fill="#00929c"/>
<rect x="825" y="833.2" width="771" height="1.6" fill="#00929c"/>
<rect x="825" y="838.2" width="771" height="1.6" fill="#00929c"/>
<rect x="1415.2" y="825.6" width="20.200000000000045" height="119.39999999999998" fill="none" stroke="#00929c" stroke-width="1.2"/>
<path d="M1420,834 l-3,4 l3,4 M1430,834 l3,4 l-3,4" fill="none" stroke="#00929c" stroke-width="1"/>
<rect x="825" y="885.15" width="771" height="1.3" fill="#00929c"/>
<rect x="825" y="942.0" width="771" height="1.2" fill="#10d890"/>
<rect x="825" y="944.9" width="771" height="1.2" fill="#00929c"/>
<rect x="825" y="952.1" width="771" height="1.2" fill="#00c8d8"/>
<rect x="825" y="958.1" width="771" height="1.2" fill="#00929c"/>
<rect x="825" y="905.4" width="163.5" height="1.2" fill="#10d890"/>
<rect x="825" y="958.1999999999999" width="148.79999999999995" height="1.2" fill="#10d890"/>
<rect x="825" y="1025" width="771" height="28" fill="#0a8cb4" stroke="none" stroke-width="1" />
<rect x="825" y="1028" width="771" height="1" fill="#0a78a0" stroke="none" stroke-width="1" />
<rect x="825" y="1030.5" width="771" height="1.2" fill="#0a7aa0" stroke="none" stroke-width="1" />
<rect x="825" y="1034" width="771" height="2" fill="#065c78" stroke="none" stroke-width="1" />
<rect x="825" y="1037" width="771" height="1" fill="#14a0c8" stroke="none" stroke-width="1" />
<rect x="825" y="1040" width="771" height="1.5" fill="#08809f" stroke="none" stroke-width="1" />
<rect x="825" y="1043" width="771" height="2.2" fill="#065a74" stroke="none" stroke-width="1" />
<rect x="825" y="1046.5" width="771" height="1" fill="#14a0c8" stroke="none" stroke-width="1" />
<rect x="825" y="1049" width="771" height="1.4" fill="#0a789a" stroke="none" stroke-width="1" />
<rect x="830.45" y="839" width="1.1" height="106" fill="#00929c"/>
<rect x="835.45" y="839" width="1.1" height="106" fill="#10d890"/>
<rect x="840.45" y="839" width="1.1" height="106" fill="#00c8d8"/>
<rect x="860.45" y="839" width="1.1" height="106" fill="#1890e0"/>
<rect x="865.45" y="839" width="1.1" height="106" fill="#00929c"/>
<rect x="870.45" y="839" width="1.1" height="106" fill="#10d890"/>
<rect x="899.45" y="839" width="1.1" height="106" fill="#00929c"/>
<rect x="904.45" y="839" width="1.1" height="106" fill="#10d890"/>
<rect x="923.45" y="839" width="1.1" height="106" fill="#00c8d8"/>
<rect x="929.45" y="839" width="1.1" height="106" fill="#1890e0"/>
<rect x="959.45" y="839" width="1.1" height="106" fill="#00929c"/>
<rect x="962.45" y="839" width="1.1" height="106" fill="#10d890"/>
<rect x="994.45" y="839" width="1.1" height="106" fill="#00929c"/>
<rect x="999.45" y="839" width="1.1" height="106" fill="#10d890"/>
<rect x="1039.45" y="839" width="1.1" height="106" fill="#00c8d8"/>
<rect x="1046.45" y="839" width="1.1" height="106" fill="#1890e0"/>
<rect x="1051.45" y="839" width="1.1" height="106" fill="#00929c"/>
<rect x="1065.45" y="839" width="1.1" height="106" fill="#10d890"/>
<rect x="1069.45" y="839" width="1.1" height="106" fill="#00929c"/>
<rect x="1073.45" y="839" width="1.1" height="106" fill="#10d890"/>
<rect x="1104.45" y="839" width="1.1" height="106" fill="#00c8d8"/>
<rect x="1108.45" y="839" width="1.1" height="106" fill="#1890e0"/>
<rect x="1112.45" y="839" width="1.1" height="106" fill="#00929c"/>
<rect x="1134.45" y="839" width="1.1" height="106" fill="#10d890"/>
<rect x="1142.45" y="839" width="1.1" height="106" fill="#00929c"/>
<rect x="1164.45" y="839" width="1.1" height="106" fill="#10d890"/>
<rect x="1169.45" y="839" width="1.1" height="106" fill="#00c8d8"/>
<rect x="1179.45" y="839" width="1.1" height="106" fill="#1890e0"/>
<rect x="1199.45" y="839" width="1.1" height="106" fill="#00929c"/>
<rect x="1204.45" y="839" width="1.1" height="106" fill="#10d890"/>
<rect x="1223.45" y="839" width="1.1" height="106" fill="#00929c"/>
<rect x="1230.45" y="839" width="1.1" height="106" fill="#10d890"/>
<rect x="1235.45" y="839" width="1.1" height="106" fill="#00c8d8"/>
<rect x="1239.45" y="839" width="1.1" height="106" fill="#1890e0"/>
<rect x="1255.45" y="839" width="1.1" height="106" fill="#00929c"/>
<rect x="1261.45" y="839" width="1.1" height="106" fill="#10d890"/>
<rect x="1266.45" y="839" width="1.1" height="106" fill="#00929c"/>
<rect x="1289.45" y="839" width="1.1" height="106" fill="#10d890"/>
<rect x="1299.45" y="839" width="1.1" height="106" fill="#00c8d8"/>
<rect x="1304.45" y="839" width="1.1" height="106" fill="#1890e0"/>
<rect x="1312.45" y="839" width="1.1" height="106" fill="#00929c"/>
<rect x="1331.45" y="839" width="1.1" height="106" fill="#10d890"/>
<rect x="1335.45" y="839" width="1.1" height="106" fill="#00929c"/>
<rect x="1340.45" y="839" width="1.1" height="106" fill="#10d890"/>
<rect x="1352.45" y="839" width="1.1" height="106" fill="#00c8d8"/>
<rect x="1356.45" y="839" width="1.1" height="106" fill="#1890e0"/>
<rect x="1361.45" y="839" width="1.1" height="106" fill="#00929c"/>
<rect x="1370.45" y="839" width="1.1" height="106" fill="#10d890"/>
<rect x="1377.45" y="839" width="1.1" height="106" fill="#00929c"/>
<rect x="1385.45" y="839" width="1.1" height="106" fill="#10d890"/>
<rect x="1402.45" y="839" width="1.1" height="106" fill="#00c8d8"/>
<rect x="1406.45" y="839" width="1.1" height="106" fill="#1890e0"/>
<rect x="1411.45" y="839" width="1.1" height="106" fill="#00929c"/>
<rect x="1417.45" y="839" width="1.1" height="106" fill="#10d890"/>
<rect x="1439.45" y="839" width="1.1" height="106" fill="#00929c"/>
<rect x="1454.45" y="839" width="1.1" height="106" fill="#10d890"/>
<rect x="1470.45" y="839" width="1.1" height="106" fill="#00c8d8"/>
<rect x="1508.45" y="839" width="1.1" height="106" fill="#1890e0"/>
<rect x="1514.45" y="839" width="1.1" height="106" fill="#00929c"/>
<rect x="1561.45" y="839" width="1.1" height="106" fill="#10d890"/>
<rect x="1567.45" y="839" width="1.1" height="106" fill="#00929c"/>
<rect x="1613.45" y="839" width="1.1" height="106" fill="#10d890"/>
<rect x="1619.45" y="839" width="1.1" height="106" fill="#00c8d8"/>
<rect x="1405.5" y="860" width="3" height="85" fill="#00929c"/>
<rect x="1268" y="892.5" width="54" height="53.299999999999955" fill="none" stroke="#ee22ee" stroke-width="1.4"/>
<path d="M1281.8,1153 V851.8 H1466.6 V1153" fill="none" stroke="#ee22ee" stroke-width="1.4"/>
<rect x="973.25" y="887" width="1.1" height="266" fill="#00929c"/>
<rect x="976.45" y="887" width="1.1" height="266" fill="#00c8d8"/>
<rect x="980.45" y="887" width="1.1" height="266" fill="#00929c"/>
<rect x="983.95" y="887" width="1.1" height="266" fill="#00c8d8"/>
<rect x="987.95" y="887" width="1.1" height="266" fill="#00929c"/>
<rect x="841.25" y="958" width="1.1" height="93" fill="#00929c"/>
<path d="M988.5,1047.6 L1160.3,958.4" stroke="#00929c" stroke-width="1.2"/>
<path d="M1428.5,958.4 L1596,1043.5" stroke="#00929c" stroke-width="1.2"/>
<rect x="1209" y="1013.1" width="11.8" height="12.2" fill="#10c8a0" stroke="none" stroke-width="1" />
<rect x="1209" y="1022" width="11.8" height="3" fill="#18e0e8" stroke="none" stroke-width="1" />
<rect x="1212" y="1014" width="1" height="8" fill="#1890e0" stroke="none" stroke-width="1" />
<rect x="1215" y="1014" width="1" height="8" fill="#1890e0" stroke="none" stroke-width="1" />
<rect x="1218" y="1014" width="1" height="8" fill="#1890e0" stroke="none" stroke-width="1" />
<rect x="1335" y="825.6" width="53.6" height="53.6" fill="#ffffff" fill-opacity="0.14" stroke="#f0e000" stroke-width="1.3"/>
<rect x="1324.25" y="815.05" width="7.5" height="7.5" fill="#fff"/>
<rect x="1324.25" y="848.65" width="7.5" height="7.5" fill="#fff"/>
<rect x="1324.25" y="882.25" width="7.5" height="7.5" fill="#fff"/>
<rect x="1357.95" y="815.05" width="7.5" height="7.5" fill="#fff"/>
<rect x="1357.95" y="882.25" width="7.5" height="7.5" fill="#fff"/>
<rect x="1391.55" y="815.05" width="7.5" height="7.5" fill="#fff"/>
<rect x="1391.55" y="848.65" width="7.5" height="7.5" fill="#fff"/>
<rect x="1391.55" y="882.25" width="7.5" height="7.5" fill="#fff"/>
<path d="M1361.7,852 l4.6,8 h-9.2 z" fill="#ee22ee"/>
<text x="1361" y="802.6" font-size="14" fill="#f0e000" text-anchor="middle" font-weight="normal" >64</text>
<text x="1406.6" y="852.5" font-size="14" fill="#f0e000" text-anchor="start" font-weight="normal" >64</text>
</svg>
<svg x="48" y="76" width="771" height="535" viewBox="48 76 771 535" overflow="hidden">
<defs>
<pattern id="plate" patternUnits="userSpaceOnUse" width="15" height="15" patternTransform="rotate(-16) skewX(-22)">
<rect width="15" height="15" fill="#4c4c48"/>
<rect x="1" y="1.2" width="6" height="5.2" rx="1" fill="#71716a"/>
<rect x="8.5" y="8.7" width="6" height="5.2" rx="1" fill="#6c6c65"/>
<rect x="8.7" y="1.5" width="5.2" height="5" rx="1" fill="#56564f"/>
<rect x="1.2" y="9" width="5.2" height="5" rx="1" fill="#55554e"/>
<rect x="1" y="6.2" width="6" height="1" fill="#2c2c2a"/>
<rect x="8.5" y="13.7" width="6" height="1" fill="#2c2c2a"/>
</pattern>
<radialGradient id="glow" cx="0.5" cy="0.5" r="0.5">
<stop offset="0.6" stop-color="#ffffff" stop-opacity="0.9"/><stop offset="1" stop-color="#ffffff" stop-opacity="0"/>
</radialGradient>
<linearGradient id="lw" x1="0" y1="0" x2="1" y2="1">
<stop offset="0" stop-color="#4e4c47"/><stop offset="1" stop-color="#46443f"/>
</linearGradient>
<filter id="noise" x="0" y="0" width="100%" height="100%"><feTurbulence type="fractalNoise" baseFrequency="0.14 0.05" numOctaves="3" seed="5"/><feColorMatrix type="matrix" values="0 0 0 0 0  0 0 0 0 0  0 0 0 0 0  1.4 0 0 0 -0.55"/></filter>
<filter id="noise2" x="0" y="0" width="100%" height="100%"><feTurbulence type="fractalNoise" baseFrequency="0.09 0.2" numOctaves="2" seed="11"/><feColorMatrix type="matrix" values="0 0 0 0 1  0 0 0 0 1  0 0 0 0 1  1.2 0 0 0 -0.62"/></filter>
<filter id="noise3" x="0" y="0" width="100%" height="100%"><feTurbulence type="fractalNoise" baseFrequency="0.08 0.1" numOctaves="3" seed="2"/><feColorMatrix type="matrix" values="0 0 0 0 0  0 0 0 0 0  0 0 0 0 0  1.4 0 0 0 -0.55"/></filter>
<clipPath id="wallclip"><path d="M334,76 H819 V300 L449,240 L411,205 L345,222 Z"/><path d="M48,76 H146.4 L200.2,303.7 L157.5,194.6 L48,450 Z"/></clipPath>
</defs>
<rect x="48" y="76" width="771" height="535" fill="#4a4844" stroke="none" stroke-width="1" />
<path d="M334,76 H819 V611 H345 Z" fill="#4d4b47"/>
<path d="M345,125 L819,120 V76 H345 Z" fill="#4f4d49"/>
<path d="M782,222 L818,114 L819,114 V400 H760 Z" fill="#5a5854"/>
<path d="M345,125 L819,120" stroke="#2c2b28" stroke-width="1.6"/>
<path d="M345,213 L794,179 L819,180" stroke="#2c2b28" stroke-width="1.4"/>
<path d="M334,76 L345,76 L352,290 L342,290 Z" fill="#6e6c68"/>
<path d="M48,76 H146.4 L200.2,303.7 L214,611 H48 Z" fill="url(#lw)"/>
<path d="M48,131 L156,131" stroke="#2e2d2a" stroke-width="1.6"/>
<path d="M48,244 L138,236" stroke="#2e2d2a" stroke-width="1.6"/>
<path d="M48,333 L100,330" stroke="#2e2d2a" stroke-width="1.4"/>
<path d="M48,250 L138,240 L157.5,194.6 L48,450 Z" fill="#000" opacity="0.12"/>
<g clip-path="url(#wallclip)"><rect x="48" y="76" width="771" height="300" filter="url(#noise)" opacity="0.32"/><rect x="48" y="76" width="771" height="300" filter="url(#noise2)" opacity="0.08"/></g>
<path d="M146.4,76 H334 L345.5,222 L349,284.2 L200.2,303.7 Z" fill="#000"/>
<path d="M200.2,303.7 L349,284.2 L411,272 L411,373 L447,370 L560,392 V611 H214 Z" fill="url(#plate)"/>
<path d="M200.2,303.7 L349,284.2 L411,272 L411,300 L210,320 Z" fill="#555551" opacity="0.6"/>
<path d="M284.2,302.4 L424.5,611 M211,451 L480.6,381 M211,344.5 L354,319 M466.5,611 L545,574.6" stroke="#6e6e68" stroke-width="2" opacity="0.8"/>
<path d="M181.4,196.4 L199.5,300 L205,611 L111.9,611 L124.6,508.5 L146.5,384 Z" fill="#434240"/>
<path d="M181.4,196.4 L190,230 L200,611 L188,611 L170,260 Z" fill="#474644"/>
<path d="M176,320 l6,-8 v30 l-7,10 z" fill="#8a8886"/>
<path d="M172,368 l6,-8 v30 l-7,10 z" fill="#8a8886"/>
<path d="M168,420 l6,-8 v30 l-7,10 z" fill="#8a8886"/>
<path d="M163,478 l6,-8 v30 l-7,10 z" fill="#8a8886"/>
<path d="M158,545 l6,-8 v30 l-7,10 z" fill="#8a8886"/>
<path d="M157.5,194.6 L181.4,196.4 L146.5,384 L124.6,508.5 L111.9,611 L48,611 L48,450 Z" fill="#373634"/>
<path d="M155.2,200.0 L170.7,195.0" stroke="#1a1a19" stroke-width="1.10"/>
<path d="M154.2,202.2 L170.3,197.2" stroke="#5a5955" stroke-width="1.11"/>
<path d="M153.3,204.4 L169.9,199.4" stroke="#2a2a28" stroke-width="0.79"/>
<path d="M152.3,206.7 L169.5,201.7" stroke="#1a1a19" stroke-width="1.14"/>
<path d="M151.3,209.0 L169.1,204.0" stroke="#5a5955" stroke-width="1.16"/>
<path d="M150.3,211.3 L168.6,206.3" stroke="#2a2a28" stroke-width="0.82"/>
<path d="M149.3,213.6 L168.2,208.6" stroke="#1a1a19" stroke-width="1.19"/>
<path d="M148.3,216.0 L167.7,211.0" stroke="#5a5955" stroke-width="1.21"/>
<path d="M147.3,218.4 L167.3,213.4" stroke="#2a2a28" stroke-width="0.86"/>
<path d="M146.2,220.9 L166.8,215.9" stroke="#1a1a19" stroke-width="1.24"/>
<path d="M145.2,223.4 L166.4,218.4" stroke="#5a5955" stroke-width="1.26"/>
<path d="M144.1,225.9 L165.9,220.9" stroke="#2a2a28" stroke-width="0.89"/>
<path d="M143.0,228.4 L165.4,223.4" stroke="#1a1a19" stroke-width="1.29"/>
<path d="M141.9,231.0 L165.0,226.0" stroke="#5a5955" stroke-width="1.31"/>
<path d="M140.8,233.6 L164.5,228.6" stroke="#2a2a28" stroke-width="0.93"/>
<path d="M139.6,236.3 L164.0,231.3" stroke="#1a1a19" stroke-width="1.34"/>
<path d="M138.5,239.0 L163.5,234.0" stroke="#5a5955" stroke-width="1.36"/>
<path d="M137.3,241.7 L163.0,236.7" stroke="#2a2a28" stroke-width="0.97"/>
<path d="M136.1,244.4 L162.5,239.4" stroke="#1a1a19" stroke-width="1.40"/>
<path d="M134.9,247.2 L161.9,242.2" stroke="#5a5955" stroke-width="1.42"/>
<path d="M133.7,250.1 L161.4,245.1" stroke="#2a2a28" stroke-width="1.00"/>
<path d="M132.5,252.9 L160.9,247.9" stroke="#1a1a19" stroke-width="1.45"/>
<path d="M131.2,255.8 L160.3,250.8" stroke="#5a5955" stroke-width="1.47"/>
<path d="M130.0,258.8 L159.8,253.8" stroke="#2a2a28" stroke-width="1.05"/>
<path d="M128.7,261.8 L159.2,256.8" stroke="#1a1a19" stroke-width="1.51"/>
<path d="M127.4,264.8 L158.7,259.8" stroke="#5a5955" stroke-width="1.53"/>
<path d="M126.1,267.9 L158.1,262.9" stroke="#2a2a28" stroke-width="1.09"/>
<path d="M124.8,271.0 L157.5,266.0" stroke="#1a1a19" stroke-width="1.57"/>
<path d="M123.4,274.1 L156.9,269.1" stroke="#5a5955" stroke-width="1.60"/>
<path d="M122.0,277.3 L156.3,272.3" stroke="#2a2a28" stroke-width="1.13"/>
<path d="M120.6,280.6 L155.7,275.6" stroke="#1a1a19" stroke-width="1.64"/>
<path d="M119.2,283.8 L155.1,278.8" stroke="#5a5955" stroke-width="1.66"/>
<path d="M117.8,287.2 L154.5,282.2" stroke="#2a2a28" stroke-width="1.18"/>
<path d="M116.4,290.5 L153.9,285.5" stroke="#1a1a19" stroke-width="1.71"/>
<path d="M114.9,293.9 L153.3,288.9" stroke="#5a5955" stroke-width="1.73"/>
<path d="M113.4,297.4 L152.6,292.4" stroke="#2a2a28" stroke-width="1.23"/>
<path d="M111.9,300.9 L152.0,295.9" stroke="#1a1a19" stroke-width="1.78"/>
<path d="M110.4,304.4 L151.3,299.4" stroke="#5a5955" stroke-width="1.80"/>
<path d="M108.9,308.0 L150.6,303.0" stroke="#2a2a28" stroke-width="1.28"/>
<path d="M107.3,311.7 L150.0,306.7" stroke="#1a1a19" stroke-width="1.85"/>
<path d="M105.7,315.4 L149.3,310.4" stroke="#5a5955" stroke-width="1.87"/>
<path d="M104.1,319.1 L148.6,314.1" stroke="#2a2a28" stroke-width="1.33"/>
<path d="M102.5,322.9 L147.9,317.9" stroke="#1a1a19" stroke-width="1.92"/>
<path d="M100.8,326.8 L147.1,321.8" stroke="#5a5955" stroke-width="1.95"/>
<path d="M99.2,330.7 L146.4,325.7" stroke="#2a2a28" stroke-width="1.38"/>
<path d="M97.5,334.6 L145.7,329.6" stroke="#1a1a19" stroke-width="2.00"/>
<path d="M95.8,338.6 L144.9,333.6" stroke="#5a5955" stroke-width="2.03"/>
<path d="M94.0,342.7 L144.2,337.7" stroke="#2a2a28" stroke-width="1.44"/>
<path d="M92.3,346.8 L143.4,341.8" stroke="#1a1a19" stroke-width="2.08"/>
<path d="M90.5,350.9 L142.6,345.9" stroke="#5a5955" stroke-width="2.11"/>
<path d="M88.7,355.2 L141.9,350.2" stroke="#2a2a28" stroke-width="1.50"/>
<path d="M86.8,359.4 L141.1,354.4" stroke="#1a1a19" stroke-width="2.17"/>
<path d="M85.0,363.8 L140.3,358.8" stroke="#5a5955" stroke-width="2.20"/>
<path d="M83.1,368.2 L139.4,363.2" stroke="#2a2a28" stroke-width="1.56"/>
<path d="M81.2,372.6 L138.6,367.6" stroke="#1a1a19" stroke-width="2.25"/>
<path d="M79.2,377.1 L137.8,372.1" stroke="#5a5955" stroke-width="2.29"/>
<path d="M77.3,381.7 L136.9,376.7" stroke="#2a2a28" stroke-width="1.62"/>
<path d="M75.3,386.3 L136.1,381.3" stroke="#1a1a19" stroke-width="2.35"/>
<path d="M73.3,391.0 L135.3,386.0" stroke="#5a5955" stroke-width="2.38"/>
<path d="M71.2,395.8 L134.4,390.8" stroke="#2a2a28" stroke-width="1.69"/>
<path d="M69.2,400.6 L133.6,395.6" stroke="#1a1a19" stroke-width="2.44"/>
<path d="M67.1,405.5 L132.7,400.5" stroke="#5a5955" stroke-width="2.47"/>
<path d="M65.0,410.4 L131.9,405.4" stroke="#2a2a28" stroke-width="1.76"/>
<path d="M62.8,415.5 L131.0,410.5" stroke="#1a1a19" stroke-width="2.54"/>
<path d="M60.6,420.5 L130.1,415.5" stroke="#5a5955" stroke-width="2.58"/>
<path d="M58.4,425.7 L129.2,420.7" stroke="#2a2a28" stroke-width="1.83"/>
<path d="M56.2,430.9 L128.2,425.9" stroke="#1a1a19" stroke-width="2.64"/>
<path d="M53.9,436.2 L127.3,431.2" stroke="#5a5955" stroke-width="2.68"/>
<path d="M51.6,441.6 L126.4,436.6" stroke="#2a2a28" stroke-width="1.90"/>
<path d="M49.3,447.0 L125.4,442.0" stroke="#1a1a19" stroke-width="2.75"/>
<path d="M48.0,452.5 L124.5,447.5" stroke="#5a5955" stroke-width="2.79"/>
<path d="M48.0,458.1 L123.5,453.1" stroke="#2a2a28" stroke-width="1.98"/>
<path d="M48.0,463.7 L122.5,458.7" stroke="#1a1a19" stroke-width="2.86"/>
<path d="M48.0,469.5 L121.5,464.5" stroke="#5a5955" stroke-width="2.90"/>
<path d="M48.0,475.3 L120.4,470.3" stroke="#2a2a28" stroke-width="2.06"/>
<path d="M48.0,481.1 L119.4,476.1" stroke="#1a1a19" stroke-width="2.98"/>
<path d="M48.0,487.1 L118.4,482.1" stroke="#5a5955" stroke-width="3.02"/>
<path d="M48.0,493.1 L117.3,488.1" stroke="#2a2a28" stroke-width="2.14"/>
<path d="M48.0,499.3 L116.2,494.3" stroke="#1a1a19" stroke-width="3.10"/>
<path d="M48.0,505.5 L115.1,500.5" stroke="#5a5955" stroke-width="3.14"/>
<path d="M48.0,511.8 L114.2,506.8" stroke="#2a2a28" stroke-width="2.23"/>
<path d="M48.0,518.1 L113.4,513.1" stroke="#1a1a19" stroke-width="3.23"/>
<path d="M48.0,524.6 L112.6,519.6" stroke="#5a5955" stroke-width="3.27"/>
<path d="M48.0,531.1 L111.8,526.1" stroke="#2a2a28" stroke-width="2.32"/>
<path d="M48.0,537.8 L111.0,532.8" stroke="#1a1a19" stroke-width="3.36"/>
<path d="M48.0,544.5 L110.1,539.5" stroke="#5a5955" stroke-width="3.40"/>
<path d="M48.0,551.3 L109.3,546.3" stroke="#2a2a28" stroke-width="2.42"/>
<path d="M48.0,558.2 L108.4,553.2" stroke="#1a1a19" stroke-width="3.50"/>
<path d="M48.0,565.2 L107.6,560.2" stroke="#5a5955" stroke-width="3.54"/>
<path d="M48.0,572.3 L106.7,567.3" stroke="#2a2a28" stroke-width="2.51"/>
<path d="M48.0,579.5 L105.8,574.5" stroke="#1a1a19" stroke-width="3.64"/>
<path d="M48.0,586.7 L104.9,581.7" stroke="#5a5955" stroke-width="3.69"/>
<path d="M48.0,594.1 L104.0,589.1" stroke="#2a2a28" stroke-width="2.62"/>
<path d="M48.0,601.6 L103.1,596.6" stroke="#1a1a19" stroke-width="3.79"/>
<path d="M48.0,609.2 L102.1,604.2" stroke="#5a5955" stroke-width="3.84"/>
<path d="M176,196.4 L141.5,384 L119.6,508.5 L106.9,611" fill="none" stroke="#4a4946" stroke-width="9"/>
<path d="M179,196.4 L144.5,384 L122.6,508.5 L109.9,611" fill="none" stroke="#6a6966" stroke-width="3"/>
<path d="M157.5,194.6 L48,450" stroke="#555451" stroke-width="1.5"/>
<path d="M199.5,300 L210,300 L216,611 L205,611 Z" fill="#858381"/>
<rect x="268" y="274.5" width="29" height="23.5" fill="#2a2a2a" stroke="#d8d8d8" stroke-width="1.2" rx="2"/>
<text x="282.5" y="283" font-size="8" fill="#e8e8e8" text-anchor="middle" font-weight="normal" style="font-family:Liberation Serif">DOOR</text>
<path d="M449,300 L545,308 L819,348 V430 L449,372 Z" fill="#555351"/>
<path d="M449,233 L819,262 V348 L617,320 L449,300 Z" fill="#333230"/>
<path d="M449,236 L628,251 L617,252 L459,276 L449,277 Z" fill="#42403d"/>
<path d="M459,276 L617,252" stroke="#2a2927" stroke-width="1.2"/>
<path d="M628,251.7 L819,265.5 V347.8 L617,320.4 Z" fill="#a6a6a0"/>
<path d="M622,300 Q680,292 720,318 L819,330 V347.8 L617,320.4 Z" fill="#96968e" opacity="0.6"/>
<clipPath id="stoneclip"><path d="M628,251.7 L819,265.5 V347.8 L617,320.4 Z"/><ellipse cx="751" cy="231" rx="54.5" ry="11.4"/></clipPath>
<g clip-path="url(#stoneclip)"><rect x="600" y="215" width="220" height="140" filter="url(#noise3)" opacity="0.3"/></g>
<path d="M697,231 V250 L806,258 V231 Z" fill="#6e6e68"/>
<ellipse cx="751" cy="231" rx="54.5" ry="11.4" fill="#9a9a94"/>
<path d="M529,240 h12 l-8,70 h-12 Z" fill="#6a6866"/>
<path d="M616,250 h14 l-10,150 h-14 Z" fill="#6a6866"/>
<path d="M715,255 h14 l-10,150 h-14 Z" fill="#6a6866"/>
<path d="M433,222 L819,252 V266 L433,236 Z" fill="#2c2c2c"/>
<path d="M433,226 L819,256" stroke="#555" stroke-width="1"/>
<path d="M440,221 L819,250" stroke="#1c1c1c" stroke-width="3" stroke-dasharray="3 2.5"/>
<path d="M343.7,179 L411,203 L411,215 L343.7,189 Z" fill="#2e2e2c"/>
<path d="M346,182 L411,206" stroke="#5a5956" stroke-width="1.2" stroke-dasharray="3 2"/>
<path d="M360,195 v80 M375,200 v80" stroke="#5c5a58" stroke-width="3"/>
<path d="M411,209 L423,209 L423,373 L411,373 Z" fill="#777573"/>
<path d="M423,209 L449,213 L449,372 L423,373 Z" fill="#5e5c5a"/>
<path d="M411,209 L437,205 L449,213 L423,212 Z" fill="#8a8886"/>
<path d="M428.7,369.8 L447,368.4 L560,455 V480 L545,476.4 Z" fill="#6c6a68"/>
<path d="M428.7,369.8 L545,476.4" stroke="#7c7a78" stroke-width="2"/>
<filter id="gl" x="-50%" y="-50%" width="200%" height="200%"><feGaussianBlur stdDeviation="2.5"/></filter>
<path d="M358,335 C349,333 349,319 357,314 C351,300 360,280 382,269 C396,262 408,266 413,273 C421,271 425,281 418,287 C414,301 404,313 391,319 C381,325 373,327 369,331 C366,335 362,337 358,335 Z" fill="#fff" stroke="#fff" stroke-width="6" opacity="0.9" filter="url(#gl)"/>
<path d="M358,335 C349,333 349,319 357,314 C351,300 360,280 382,269 C396,262 408,266 413,273 C421,271 425,281 418,287 C414,301 404,313 391,319 C381,325 373,327 369,331 C366,335 362,337 358,335 Z" fill="#3e3e3e" filter="url(#gl2)"/>
<path d="M384,281 l7,4 M393,291 l6,2" stroke="#262626" stroke-width="1.8"/>
<text x="383.5" y="258.5" font-size="18" fill="#ffffff" text-anchor="middle" font-weight="bold" style="font-family:Liberation Mono;paint-order:stroke" stroke="#1a1a1a" stroke-width="2.2" letter-spacing="2.5">ITEM</text>
<line x1="318" y1="235.6" x2="409" y2="227" stroke="#f0e010" stroke-width="1.3"/>
<line x1="318" y1="235.6" x2="342.7" y2="261.7" stroke="#f0e010" stroke-width="1.3"/>
<line x1="409" y1="227" x2="449.4" y2="249.8" stroke="#f0e010" stroke-width="1.3"/>
<line x1="342.7" y1="261.7" x2="449.4" y2="249.8" stroke="#f0e010" stroke-width="1.3"/>
<line x1="449.4" y1="249.8" x2="448.5" y2="347" stroke="#f0e010" stroke-width="1.3"/>
<line x1="342.7" y1="261.7" x2="352" y2="366" stroke="#f0e010" stroke-width="1.3"/>
<line x1="352" y1="366" x2="448.5" y2="347" stroke="#f0e010" stroke-width="1.3"/>
<line x1="318" y1="235.6" x2="330" y2="335" stroke="#f0e010" stroke-width="1.3"/>
<line x1="409" y1="227" x2="409" y2="311.5" stroke="#f0e010" stroke-width="1.3"/>
<line x1="330" y1="335" x2="409" y2="311.5" stroke="#f0e010" stroke-width="1.3"/>
<line x1="330" y1="335" x2="352" y2="366" stroke="#f0e010" stroke-width="1.3"/>
<line x1="409" y1="311.5" x2="448.5" y2="347" stroke="#f0e010" stroke-width="1.3"/>
<path d="M357.3,464.8 L370.3,450 L386,450 L372.2,479 M389,459 L397.4,466.6 L407.6,452.6 M368.5,480.6 L356.4,487 L337.7,487 M372,477.8 L384.3,486.2 L379.7,514.2" fill="none" stroke="#111" stroke-width="13.4" stroke-linecap="round" stroke-linejoin="round"/>
<path d="M386,450 L372.2,479" stroke="#111" stroke-width="17" stroke-linecap="round"/>
<circle cx="396.3" cy="442.8" r="10.4" fill="#111"/>
<path d="M357.3,464.8 L370.3,450 L386,450 L372.2,479 M389,459 L397.4,466.6 L407.6,452.6 M368.5,480.6 L356.4,487 L337.7,487 M372,477.8 L384.3,486.2 L379.7,514.2" fill="none" stroke="#fff" stroke-width="10.2" stroke-linecap="round" stroke-linejoin="round"/>
<path d="M386,450 L372.2,479" stroke="#fff" stroke-width="13.8" stroke-linecap="round"/>
<circle cx="396.3" cy="442.8" r="8.9" fill="#fff"/>
<ellipse cx="414.6" cy="521.6" rx="19" ry="6.5" fill="#3a8a3a" opacity="0.45" filter="url(#gl2)"/>
<ellipse cx="414.6" cy="521.6" rx="17" ry="4.6" fill="#74c474" stroke="#1e4a1e" stroke-width="0.9"/>
<ellipse cx="415.1" cy="487" rx="7" ry="1.8" fill="#6abf6a"/>
<path d="M415.3,512.3 V492.3" stroke="#8ccff0" stroke-width="2.2"/>
<path d="M406.7,497.4 L415.3,492 L423.5,497.4" stroke="#5a8ab0" stroke-width="1.4" fill="none"/>
<text x="54" y="91" font-size="12" fill="#5c5a56" text-anchor="start" font-weight="normal" >Lightmapped</text>
</svg>
<rect x="1598" y="50" width="251" height="1105" fill="#f0f0f0" stroke="none" stroke-width="1" />
<rect x="1600" y="65" width="3" height="1090" fill="#c4c4c4" stroke="none" stroke-width="1" />
<path d="M1601,53 l4.5,4 l-4.5,4 z" fill="#808080"/>
<rect x="1607" y="49" width="242" height="1" fill="#a0a0a0" stroke="none" stroke-width="1" />
<rect x="1607" y="50" width="242" height="2" fill="#ffffff" stroke="none" stroke-width="1" />
<rect x="1607" y="52" width="242" height="21" fill="#e3e3e3" stroke="none" stroke-width="1" />
<rect x="1607" y="73" width="242" height="1" fill="#c8c8c8" stroke="none" stroke-width="1" />
<path d="M1611,58 h8.5 l-4.25,4.6 z" fill="#000"/>
<text x="1626" y="66" font-size="12.2" fill="#000" text-anchor="start" font-weight="normal" >Textures</text>
<text x="1661" y="98" font-size="12.2" fill="#000" text-anchor="end" font-weight="normal" >Group</text>
<rect x="1667.5" y="82.5" width="178" height="22" fill="#e5e5e5" stroke="#adadad" stroke-width="1" />
<text x="1671" y="98" font-size="12" fill="#000" text-anchor="start" font-weight="normal" >All Textures</text>
<path d="M1832,91 l4,4 l4,-4" fill="none" stroke="#333" stroke-width="1.1"/>
<text x="1661" y="125" font-size="12.2" fill="#000" text-anchor="end" font-weight="normal" >Texture</text>
<rect x="1667.5" y="111.5" width="178" height="20" fill="#ffffff" stroke="#7a7a7a" stroke-width="1" />
<text x="1671" y="126" font-size="12" fill="#000" text-anchor="start" font-weight="normal" >201_camera_diffuse1</text>
<path d="M1832,119 l4,4 l4,-4" fill="none" stroke="#333" stroke-width="1.1"/>
<rect x="1613" y="141" width="187" height="1" fill="#a8a8a8" stroke="none" stroke-width="1" />
<rect x="1610.5" y="152.5" width="162" height="124" fill="#f0f0f0" stroke="#7a7a7a" stroke-width="1" />
<g>
<rect x="1630" y="152" width="124" height="125" fill="#4a403d"/>
<path d="M1630,152 H1754 V178 H1726 L1712,206 L1660,206 L1630,197 Z" fill="#575b5d"/>
<circle cx="1654.3" cy="180.3" r="24" fill="#5f6365"/>
<circle cx="1654.3" cy="180.3" r="18" fill="none" stroke="#4a4e50" stroke-width="0.8"/>
<circle cx="1679" cy="161" r="7" fill="#5a5e60"/>
<circle cx="1701.6" cy="183.6" r="23.7" fill="#5f6365"/>
<circle cx="1701.6" cy="183.6" r="19.5" fill="#56595b" stroke="#2c2e30" stroke-width="2.2"/>
<rect x="1727" y="180" width="27" height="22" fill="#2c2c2c"/>
<circle cx="1736.4" cy="166" r="13" fill="#ffffff"/>
<circle cx="1736.4" cy="166" r="11.5" fill="#d4d4d4" stroke="#888" stroke-width="0.6"/>
<circle cx="1724.2" cy="206.7" r="9" fill="#000"/>
<circle cx="1724.5" cy="225" r="9.5" fill="#2c2c2c"/>
<circle cx="1725" cy="225" r="1.8" fill="#000"/>
<path d="M1675,192 h7 v14 l9,10 l-3,17 h-20 l-5,-17 l10,-10 z" fill="#242424"/>
<path d="M1694,210 h18 l6,15 l-3,8 h-24 l-4,-8 z" fill="#2a2a2a"/>
<path d="M1631,205 q10,-2 12,3 v50 h-8 v-44 h-5 z" fill="#1c1c1c"/>
<path d="M1638,214 h22 l-4,24 h-14 z" fill="#242424"/>
<rect x="1644" y="232" width="6" height="28" fill="#1c1c1c"/>
<rect x="1659" y="234" width="85" height="25" fill="#525658"/>
<rect x="1659" y="240" width="85" height="3" fill="#3e4244"/>
<rect x="1659" y="251" width="85" height="3" fill="#3e4244"/>
<rect x="1746" y="205" width="7" height="53" fill="#1f1f1f"/>
<rect x="1630" y="259" width="124" height="18" fill="#4e5254"/>
<rect x="1712" y="260" width="41" height="17" fill="#5a5e60"/>
<rect x="1634" y="268" width="68" height="5" fill="#2a2c2e"/>
</g>

<text x="1780" y="165" font-size="12" fill="#000" text-anchor="start" font-weight="normal" >512 x 512</text>
<rect x="1780.5" y="201.5" width="63" height="19" fill="#e1e1e1" stroke="#adadad" stroke-width="1" />
<text x="1812.0" y="215.3" font-size="11.7" fill="#000" text-anchor="middle" font-weight="normal" >Apply</text>
<rect x="1781.5" y="229.5" width="63" height="19" fill="#e1e1e1" stroke="#adadad" stroke-width="1" />
<text x="1813.0" y="243.3" font-size="11.7" fill="#000" text-anchor="middle" font-weight="normal" >Browse...</text>
<rect x="1780.5" y="258.5" width="63" height="18" fill="#e1e1e1" stroke="#adadad" stroke-width="1" />
<text x="1812.0" y="271.8" font-size="11.7" fill="#000" text-anchor="middle" font-weight="normal" >Replace...</text>
<rect x="1607" y="281" width="242" height="1" fill="#a0a0a0" stroke="none" stroke-width="1" />
<rect x="1607" y="282" width="242" height="2" fill="#ffffff" stroke="none" stroke-width="1" />
<rect x="1607" y="284" width="242" height="21" fill="#e3e3e3" stroke="none" stroke-width="1" />
<rect x="1607" y="305" width="242" height="1" fill="#c8c8c8" stroke="none" stroke-width="1" />
<path d="M1611,290 h8.5 l-4.25,4.6 z" fill="#000"/>
<text x="1626" y="298" font-size="12.2" fill="#000" text-anchor="start" font-weight="normal" >Visgroups</text>
<rect x="1610.5" y="312.5" width="235" height="165" fill="#ffffff" stroke="#828790" stroke-width="1" />
<rect x="1618.5" y="318.5" width="7" height="7" fill="#fff" stroke="#8a9ab0" stroke-width="0.8" />
<path d="M1620,322 h4 M1622,320 v4" stroke="#2050b0" stroke-width="0.9"/>
<path d="M1622.5,326 v32 M1622.5,340.5 h7 M1622.5,358.5 h7" stroke="#999" stroke-width="1" stroke-dasharray="1 1"/>
<rect x="1645.8" y="331" width="42" height="18" fill="#0ab0d8" stroke="none" stroke-width="1" />
<rect x="1645.8" y="349.3" width="34" height="17.3" fill="#00d2de" stroke="none" stroke-width="1" />
<rect x="1630.5" y="316.1" width="12" height="12" fill="#fff" stroke="#333" stroke-width="1" />
<path d="M1633,322.1 l2.8,3 l5,-6" fill="none" stroke="#222" stroke-width="1.2"/>
<rect x="1630.5" y="333.9" width="12" height="12" fill="#fff" stroke="#333" stroke-width="1" />
<path d="M1633,339.9 l2.8,3 l5,-6" fill="none" stroke="#222" stroke-width="1.2"/>
<rect x="1630.5" y="351.8" width="12" height="12" fill="#fff" stroke="#333" stroke-width="1" />
<path d="M1633,357.8 l2.8,3 l5,-6" fill="none" stroke="#222" stroke-width="1.2"/>
<text x="1648" y="326.5" font-size="12.2" fill="#000" text-anchor="start" font-weight="normal" >Auto</text>
<text x="1648" y="344.5" font-size="12.2" fill="#000" text-anchor="start" font-weight="normal" >entities</text>
<text x="1648" y="362.5" font-size="12.2" fill="#000" text-anchor="start" font-weight="normal" >solids</text>
<rect x="1614.5" y="488.5" width="50" height="20" fill="#e1e1e1" stroke="#adadad" stroke-width="1" />
<text x="1639.5" y="502.8" font-size="11.7" fill="#000" text-anchor="middle" font-weight="normal" >Edit</text>
<rect x="1673.5" y="488.5" width="46" height="20" fill="#e1e1e1" stroke="#adadad" stroke-width="1" />
<text x="1696.5" y="502.8" font-size="11.7" fill="#000" text-anchor="middle" font-weight="normal" >Select</text>
<rect x="1728.5" y="488.5" width="61" height="20" fill="#e1e1e1" stroke="#adadad" stroke-width="1" />
<text x="1759.0" y="502.8" font-size="11.7" fill="#000" text-anchor="middle" font-weight="normal" >Show All</text>
<rect x="1798.5" y="488.5" width="43" height="20" fill="#e1e1e1" stroke="#adadad" stroke-width="1" />
<text x="1820.0" y="502.8" font-size="11.7" fill="#000" text-anchor="middle" font-weight="normal" >New</text>
<rect x="1607" y="516" width="242" height="1" fill="#a0a0a0" stroke="none" stroke-width="1" />
<rect x="1607" y="517" width="242" height="2" fill="#ffffff" stroke="none" stroke-width="1" />
<rect x="1607" y="519" width="242" height="21" fill="#e3e3e3" stroke="none" stroke-width="1" />
<rect x="1607" y="540" width="242" height="1" fill="#c8c8c8" stroke="none" stroke-width="1" />
<path d="M1611,525 h8.5 l-4.25,4.6 z" fill="#000"/>
<text x="1626" y="533" font-size="12.2" fill="#000" text-anchor="start" font-weight="normal" >Select Tool</text>
<text x="1618" y="561" font-size="12.2" fill="#000" text-anchor="start" font-weight="normal" >Manipulation Mode</text>
<rect x="1616.5" y="568.5" width="60" height="22" fill="#cce4f7" stroke="#0078d7" stroke-width="1" />
<rect x="1617.5" y="569.5" width="58" height="20" fill="none" stroke="#0078d7" stroke-width="1" />
<text x="1646.5" y="583.8" font-size="11.7" fill="#000" text-anchor="middle" font-weight="normal" >Translate</text>
<rect x="1685.5" y="568.5" width="48" height="22" fill="#e1e1e1" stroke="#adadad" stroke-width="1" />
<text x="1709.5" y="583.8" font-size="11.7" fill="#000" text-anchor="middle" font-weight="normal" >Rotate</text>
<rect x="1742.5" y="568.5" width="41" height="22" fill="#e1e1e1" stroke="#adadad" stroke-width="1" />
<text x="1763.0" y="583.8" font-size="11.7" fill="#000" text-anchor="middle" font-weight="normal" >Skew</text>
<rect x="1615.5" y="600.5" width="12" height="12" fill="#fff" stroke="#333" stroke-width="1" />
<path d="M1618,606.5 l2.8,3 l5,-6" fill="none" stroke="#222" stroke-width="1.2"/>
<text x="1634" y="611.5" font-size="12.2" fill="#000" text-anchor="start" font-weight="normal" >Show 3D Widgets</text>
<rect x="1618" y="627" width="219" height="1" fill="#a8a8a8" stroke="none" stroke-width="1" />
<text x="1618" y="647" font-size="12.2" fill="#000" text-anchor="start" font-weight="normal" >Actions</text>
<rect x="1616.5" y="654.5" width="83" height="20" fill="#e1e1e1" stroke="#adadad" stroke-width="1" />
<text x="1658.0" y="668.8" font-size="11.7" fill="#000" text-anchor="middle" font-weight="normal" >Move to World</text>
<rect x="1708.5" y="654.5" width="81" height="20" fill="#e1e1e1" stroke="#adadad" stroke-width="1" />
<text x="1749.0" y="668.8" font-size="11.7" fill="#000" text-anchor="middle" font-weight="normal" >Tie to Entity</text>
<rect x="1607" y="684" width="242" height="1" fill="#a0a0a0" stroke="none" stroke-width="1" />
<rect x="1607" y="685" width="242" height="2" fill="#ffffff" stroke="none" stroke-width="1" />
<rect x="1607" y="687" width="242" height="21" fill="#e3e3e3" stroke="none" stroke-width="1" />
<rect x="1607" y="708" width="242" height="1" fill="#c8c8c8" stroke="none" stroke-width="1" />
<path d="M1611,693 h8.5 l-4.25,4.6 z" fill="#000"/>
<text x="1626" y="701" font-size="12.2" fill="#000" text-anchor="start" font-weight="normal" >Contextual Help</text>
<text x="1608" y="724" font-size="12.2"><tspan font-weight="bold">Click</tspan> to select an object.</text>
<text x="1608" y="743" font-size="12.2">In the 3D view, <tspan font-weight="bold">click and hold</tspan> and use the</text>
<text x="1608" y="758" font-size="12.2"><tspan font-weight="bold">mouse wheel</tspan> to cycle through objects</text>
<text x="1608" y="773" font-size="12.2">behind the cursor.</text>
<text x="1608" y="792" font-size="12.2">In the 2D view, <tspan font-weight="bold">click the selection box</tspan> to</text>
<text x="1608" y="807" font-size="12.2">cycle between manipulation modes.</text>
<g>
<rect x="544.5" y="397.5" width="707" height="490" fill="#f0f0f0" stroke="#f4f4f4" stroke-width="1" />
<rect x="545" y="398" width="706" height="30" fill="#ffffff" stroke="none" stroke-width="1" />
<text x="553.6" y="417" font-size="11.7" fill="#999999" text-anchor="start" font-weight="normal" >Object Properties</text>
<path d="M1231,407 l10,10 M1241,407 l-10,10" stroke="#555" stroke-width="1"/>
<rect x="557.5" y="462.5" width="679" height="382" fill="#ffffff" stroke="#d9d9d9" stroke-width="1" />
<rect x="623.5" y="443.5" width="45.6" height="19" fill="#f0f0f0" stroke="#d9d9d9" stroke-width="1" />
<rect x="669.1" y="443.5" width="57.4" height="19" fill="#f0f0f0" stroke="#d9d9d9" stroke-width="1" />
<rect x="557.5" y="440.5" width="66" height="22" fill="#ffffff" stroke="#d9d9d9" stroke-width="1" />
<rect x="558" y="461" width="65" height="3" fill="#ffffff" stroke="none" stroke-width="1" />
<text x="565.5" y="455" font-size="11.7" fill="#000" text-anchor="start" font-weight="normal" >Class Info</text>
<text x="628.2" y="457" font-size="11.7" fill="#000" text-anchor="start" font-weight="normal" >Flags</text>
<text x="676.3" y="457" font-size="11.7" fill="#000" text-anchor="start" font-weight="normal" >Visgroup</text>
<text x="570.2" y="486.1" font-size="11.7" fill="#000" text-anchor="start" font-weight="normal" >Class</text>
<rect x="607.5" y="471.5" width="197" height="22" fill="#ffffff" stroke="#7a7a7a" stroke-width="1" />
<text x="610" y="486.3" font-size="11.7" fill="#000" text-anchor="start" font-weight="normal" >item</text>
<path d="M791.5,480 l4,4 l4,-4" fill="none" stroke="#333" stroke-width="1.1"/>
<rect x="813.5" y="472.5" width="58" height="20" fill="#cccccc" stroke="#bfbfbf" stroke-width="1" />
<text x="842.5" y="486.8" font-size="11.7" fill="#838383" text-anchor="middle" font-weight="normal" >Change</text>
<rect x="880.5" y="472.5" width="58" height="20" fill="#cccccc" stroke="#bfbfbf" stroke-width="1" />
<text x="909.5" y="486.8" font-size="11.7" fill="#838383" text-anchor="middle" font-weight="normal" >Cancel</text>
<rect x="957.5" y="471.5" width="68" height="22" fill="#cce4f7" stroke="#0078d7" stroke-width="1" />
<rect x="958.5" y="472.5" width="66" height="20" fill="none" stroke="#0078d7" stroke-width="1" />
<text x="991.5" y="486.8" font-size="11.7" fill="#000" text-anchor="middle" font-weight="normal" >Smart Edit</text>
<rect x="1034.5" y="472.5" width="72" height="20" fill="#e1e1e1" stroke="#adadad" stroke-width="1" />
<text x="1070.5" y="486.8" font-size="11.7" fill="#000" text-anchor="middle" font-weight="normal" >Help</text>
<text x="1120.4" y="484.3" font-size="11.7" fill="#000" text-anchor="start" font-weight="normal" >Angles:</text>
<rect x="1117.5" y="493.5" width="66" height="22" fill="#ffffff" stroke="#7a7a7a" stroke-width="1" />
<path d="M1170.5,502 l4,4 l4,-4" fill="none" stroke="#333" stroke-width="1.1"/>
<circle cx="1209" cy="489.7" r="18.3" fill="#000"/>
<path d="M1191,492 a18.3,18.3 0 0 1 16,-20.5" fill="none" stroke="#777" stroke-width="0.8"/>
<rect x="1209.6" y="488.8" width="15.2" height="3" fill="#ffffff" stroke="none" stroke-width="1" />
<text x="573.5" y="527.4" font-size="11.7" fill="#000" text-anchor="start" font-weight="normal" >Keyvalues</text>
<rect x="636.5" y="512.5" width="41" height="20" fill="#e1e1e1" stroke="#adadad" stroke-width="1" />
<text x="657.0" y="526.8" font-size="11.7" fill="#000" text-anchor="middle" font-weight="normal" >Copy</text>
<rect x="686.5" y="512.5" width="41" height="20" fill="#e1e1e1" stroke="#adadad" stroke-width="1" />
<text x="707.0" y="526.8" font-size="11.7" fill="#000" text-anchor="middle" font-weight="normal" >Paste</text>
<rect x="567.5" y="537.5" width="389" height="269" fill="#ffffff" stroke="#828790" stroke-width="1" />
<rect x="688" y="540" width="1" height="22" fill="#e5e5e5" stroke="none" stroke-width="1" />
<text x="575.4" y="555.6" font-size="11.7" fill="#000" text-anchor="start" font-weight="normal" >Property Name</text>
<text x="695.2" y="555.6" font-size="11.7" fill="#000" text-anchor="start" font-weight="normal" >Value</text>
<rect x="572" y="600" width="384" height="19.7" fill="#f0f0f0" stroke="none" stroke-width="1" />
<rect x="569" y="581.5" width="387" height="1" fill="#f0f0f0" stroke="none" stroke-width="1" />
<rect x="569" y="600" width="387" height="1" fill="#f0f0f0" stroke="none" stroke-width="1" />
<rect x="569" y="619.7" width="387" height="1" fill="#f0f0f0" stroke="none" stroke-width="1" />
<rect x="569" y="638.6" width="387" height="1" fill="#f0f0f0" stroke="none" stroke-width="1" />
<rect x="569" y="657.4" width="387" height="1" fill="#f0f0f0" stroke="none" stroke-width="1" />
<rect x="569" y="676.4" width="387" height="1" fill="#f0f0f0" stroke="none" stroke-width="1" />
<rect x="569" y="695.4" width="387" height="1" fill="#f0f0f0" stroke="none" stroke-width="1" />
<rect x="569" y="714.4" width="387" height="1" fill="#f0f0f0" stroke="none" stroke-width="1" />
<rect x="569" y="733.4" width="387" height="1" fill="#f0f0f0" stroke="none" stroke-width="1" />
<rect x="569" y="752.6" width="387" height="1" fill="#f0f0f0" stroke="none" stroke-width="1" />
<rect x="569" y="771.5" width="387" height="1" fill="#f0f0f0" stroke="none" stroke-width="1" />
<rect x="689" y="562" width="1" height="227" fill="#f0f0f0" stroke="none" stroke-width="1" />
<text x="575.4" y="577" font-size="11.7" fill="#000" text-anchor="start" font-weight="normal" >Name</text>
<text x="695.2" y="577" font-size="11.7" fill="#000" text-anchor="start" font-weight="normal" >Document SCP-106</text>
<text x="575.4" y="596" font-size="11.7" fill="#000" text-anchor="start" font-weight="normal" >Template Name</text>
<text x="695.2" y="596" font-size="11.7" fill="#000" text-anchor="start" font-weight="normal" >paper</text>
<text x="575.4" y="615" font-size="11.7" fill="#000" text-anchor="start" font-weight="normal" >Use Custom Rotation</text>
<text x="695.2" y="615" font-size="11.7" fill="#000" text-anchor="start" font-weight="normal" >No</text>
<text x="575.4" y="634" font-size="11.7" fill="#000" text-anchor="start" font-weight="normal" >Custom Rotation</text>
<text x="695.2" y="634" font-size="11.7" fill="#000" text-anchor="start" font-weight="normal" >360 0 360</text>
<text x="575.4" y="653" font-size="11.7" fill="#000" text-anchor="start" font-weight="normal" >State 1</text>
<text x="695.2" y="653" font-size="11.7" fill="#000" text-anchor="start" font-weight="normal" >0.0</text>
<text x="575.4" y="672" font-size="11.7" fill="#000" text-anchor="start" font-weight="normal" >State 2</text>
<text x="695.2" y="672" font-size="11.7" fill="#000" text-anchor="start" font-weight="normal" >0.0</text>
<text x="575.4" y="691" font-size="11.7" fill="#000" text-anchor="start" font-weight="normal" >Spawn Chance</text>
<text x="695.2" y="691" font-size="11.7" fill="#000" text-anchor="start" font-weight="normal" >1.0</text>
<text x="575.4" y="710" font-size="11.7" fill="#000" text-anchor="start" font-weight="normal" >Position</text>
<text x="695.2" y="710" font-size="11.7" fill="#000" text-anchor="start" font-weight="normal" >688 112 -32</text>
<rect x="568" y="789" width="388" height="17" fill="#f0f0f0" stroke="none" stroke-width="1" />
<rect x="586.2" y="790" width="346.6" height="14.5" fill="#cdcdcd" stroke="none" stroke-width="1" />
<path d="M579.5,792.5 l-3.5,3.8 l3.5,3.8" fill="none" stroke="#606060" stroke-width="1.4"/>
<path d="M944.5,792.5 l3.5,3.8 l-3.5,3.8" fill="none" stroke="#606060" stroke-width="1.4"/>
<rect x="568.5" y="814.5" width="72" height="20" fill="#e1e1e1" stroke="#adadad" stroke-width="1" />
<text x="604.5" y="828.8" font-size="11.7" fill="#000" text-anchor="middle" font-weight="normal" >Add</text>
<rect x="649.5" y="814.5" width="72" height="20" fill="#e1e1e1" stroke="#adadad" stroke-width="1" />
<text x="685.5" y="828.8" font-size="11.7" fill="#000" text-anchor="middle" font-weight="normal" >Delete</text>
<rect x="966.5" y="542.5" width="12.5" height="12.5" fill="#ffffff" stroke="#333" stroke-width="1" />
<text x="985.5" y="553.2" font-size="11.7" fill="#000" text-anchor="start" font-weight="normal" >Use Custom Rotation</text>
<text x="966.2" y="612" font-size="11.7" fill="#000" text-anchor="start" font-weight="normal" >Help:</text>
<rect x="963.5" y="621.5" width="248" height="90" fill="#f0f0f0" stroke="#646464" stroke-width="1" />
<rect x="1212" y="621.4" width="17" height="90" fill="#f0f0f0" stroke="none" stroke-width="1" />
<text x="968" y="634.4" font-size="11.7" fill="#000" text-anchor="start" font-weight="normal" >If set to No, the item's rotation will be</text>
<text x="968" y="649.2" font-size="11.7" fill="#000" text-anchor="start" font-weight="normal" >randomized.</text>
<path d="M1216.5,633 l3.5,-3.5 l3.5,3.5" fill="none" stroke="#a0a0a0" stroke-width="1"/>
<path d="M1216.5,701.5 l3.5,3.5 l3.5,-3.5" fill="none" stroke="#a0a0a0" stroke-width="1"/>
<text x="966.2" y="729.5" font-size="11.7" fill="#000" text-anchor="start" font-weight="normal" >Comments:</text>
<rect x="963.5" y="739.5" width="248" height="96" fill="#ffffff" stroke="#646464" stroke-width="1" />
<rect x="1212" y="739.3" width="17" height="96" fill="#f0f0f0" stroke="none" stroke-width="1" />
<path d="M1216.5,749.5 l3.5,-3.5 l3.5,3.5" fill="none" stroke="#a0a0a0" stroke-width="1"/>
<path d="M1216.5,825.5 l3.5,3.5 l3.5,-3.5" fill="none" stroke="#a0a0a0" stroke-width="1"/>
<rect x="1003.5" y="853.5" width="72" height="20" fill="#e1e1e1" stroke="#adadad" stroke-width="1" />
<text x="1039.5" y="867.8" font-size="11.7" fill="#000" text-anchor="middle" font-weight="normal" >Apply</text>
<rect x="1084.5" y="853.5" width="72" height="20" fill="#e1e1e1" stroke="#adadad" stroke-width="1" />
<text x="1120.5" y="867.8" font-size="11.7" fill="#000" text-anchor="middle" font-weight="normal" >OK</text>
<rect x="1165.5" y="853.5" width="72" height="20" fill="#e1e1e1" stroke="#adadad" stroke-width="1" />
<text x="1201.5" y="867.8" font-size="11.7" fill="#000" text-anchor="middle" font-weight="normal" >Cancel</text>
</g>
</svg>
</body></html>
